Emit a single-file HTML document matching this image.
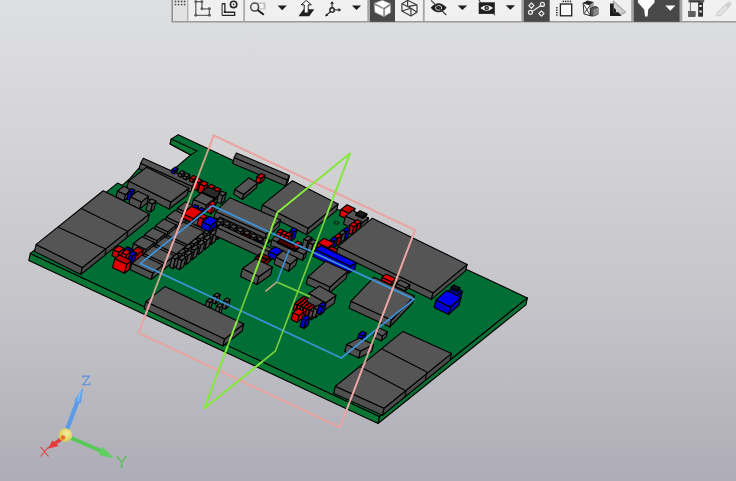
<!DOCTYPE html>
<html><head><meta charset="utf-8"><style>
html,body{margin:0;padding:0;width:736px;height:481px;overflow:hidden;}
body{background:linear-gradient(to bottom,#dedfe0 0%,#d3d3d5 31%,#c5c5ca 62%,#aeadb7 100%);position:relative;font-family:"Liberation Sans",sans-serif;}
svg{position:absolute;left:0;top:0;}
</style></head><body>
<svg width="736" height="481" viewBox="0 0 736 481">
<defs><filter id="bl" x="-5%" y="-5%" width="110%" height="110%"><feGaussianBlur stdDeviation="0.35"/></filter></defs>
<g filter="url(#bl)">
<polygon points="30.3,253.4 379.5,416.5 378.0,423.5 28.8,260.4" fill="#087636" stroke="#000" stroke-width="1.1" stroke-linejoin="round"/>
<polygon points="379.5,416.5 527.4,297.9 525.9,304.9 378.0,423.5" fill="#077134" stroke="#000" stroke-width="1.1" stroke-linejoin="round"/>
<polygon points="178.2,134.8 527.4,297.9 379.5,416.5 30.3,253.4 117.5,183.1 122.2,185.3 130.0,178.3 140.5,166.3 151.7,164.7 171.8,171.0 190.7,154.9 170.1,144.0 171.3,138.9" fill="#016e36" stroke="#000" stroke-width="1.1" stroke-linejoin="round"/>
<polygon points="171.3,138.9 197.0,150.9 190.7,154.9 170.1,144.0" fill="#087636" stroke="#000" stroke-width="1.1" stroke-linejoin="round"/>
<ellipse cx="336.5" cy="222.8" rx="2.6" ry="1.4" fill="none" stroke="#000" stroke-width="0.8"/>
<polygon points="140.6,163.2 192.5,186.5 191.1,192.0 139.2,168.7" fill="#505050" stroke="#000" stroke-width="1.1" stroke-linejoin="round"/><polygon points="192.5,186.5 195.2,181.5 193.8,187.0 191.1,192.0" fill="#4c4c4c" stroke="#000" stroke-width="1.1" stroke-linejoin="round"/><polygon points="140.6,163.2 143.3,158.2 195.2,181.5 192.5,186.5" fill="#555555" stroke="#000" stroke-width="1.1" stroke-linejoin="round"/>
<polygon points="172.0,169.5 175.0,170.9 174.2,173.9 171.2,172.5" fill="#0000cc" stroke="#000" stroke-width="1.1" stroke-linejoin="round"/><polygon points="175.0,170.9 178.0,168.5 177.2,171.5 174.2,173.9" fill="#0000b4" stroke="#000" stroke-width="1.1" stroke-linejoin="round"/><polygon points="172.0,169.5 175.0,167.1 178.0,168.5 175.0,170.9" fill="#0000ee" stroke="#000" stroke-width="1.1" stroke-linejoin="round"/>
<polygon points="234.2,157.4 287.3,180.0 285.8,186.0 232.7,163.4" fill="#505050" stroke="#000" stroke-width="1.1" stroke-linejoin="round"/><polygon points="287.3,180.0 289.5,175.6 288.0,181.6 285.8,186.0" fill="#4c4c4c" stroke="#000" stroke-width="1.1" stroke-linejoin="round"/><polygon points="234.2,157.4 236.4,153.0 289.5,175.6 287.3,180.0" fill="#555555" stroke="#000" stroke-width="1.1" stroke-linejoin="round"/>
<polygon points="178.8,173.0 181.8,174.4 181.1,177.4 178.1,176.0" fill="#505050" stroke="#000" stroke-width="1.1" stroke-linejoin="round"/><polygon points="181.8,174.4 184.8,172.0 184.1,175.0 181.1,177.4" fill="#4c4c4c" stroke="#000" stroke-width="1.1" stroke-linejoin="round"/><polygon points="178.8,173.0 181.8,170.6 184.8,172.0 181.8,174.4" fill="#555555" stroke="#000" stroke-width="1.1" stroke-linejoin="round"/>
<polygon points="183.8,175.5 186.8,176.9 186.1,179.9 183.1,178.5" fill="#505050" stroke="#000" stroke-width="1.1" stroke-linejoin="round"/><polygon points="186.8,176.9 189.8,174.5 189.1,177.5 186.1,179.9" fill="#4c4c4c" stroke="#000" stroke-width="1.1" stroke-linejoin="round"/><polygon points="183.8,175.5 186.8,173.1 189.8,174.5 186.8,176.9" fill="#555555" stroke="#000" stroke-width="1.1" stroke-linejoin="round"/>
<polygon points="190.1,177.9 193.6,179.5 192.8,182.5 189.3,180.9" fill="#cc0000" stroke="#000" stroke-width="1.1" stroke-linejoin="round"/><polygon points="193.6,179.5 196.6,177.1 195.8,180.1 192.8,182.5" fill="#b00000" stroke="#000" stroke-width="1.1" stroke-linejoin="round"/><polygon points="190.1,177.9 193.1,175.5 196.6,177.1 193.6,179.5" fill="#e40000" stroke="#000" stroke-width="1.1" stroke-linejoin="round"/>
<polygon points="257.0,176.7 261.0,178.5 259.8,183.5 255.8,181.7" fill="#cc0000" stroke="#000" stroke-width="1.1" stroke-linejoin="round"/><polygon points="261.0,178.5 265.0,175.3 263.8,180.3 259.8,183.5" fill="#b00000" stroke="#000" stroke-width="1.1" stroke-linejoin="round"/><polygon points="257.0,176.7 261.0,173.5 265.0,175.3 261.0,178.5" fill="#e40000" stroke="#000" stroke-width="1.1" stroke-linejoin="round"/>
<polygon points="194.6,180.8 198.8,182.8 196.8,190.8 192.6,188.8" fill="#cc0000" stroke="#000" stroke-width="1.1" stroke-linejoin="round"/><polygon points="198.8,182.8 202.0,180.2 200.0,188.2 196.8,190.8" fill="#b00000" stroke="#000" stroke-width="1.1" stroke-linejoin="round"/><polygon points="194.6,180.8 197.8,178.2 202.0,180.2 198.8,182.8" fill="#e40000" stroke="#000" stroke-width="1.1" stroke-linejoin="round"/>
<polygon points="207.8,186.8 211.8,188.7 210.8,192.7 206.8,190.8" fill="#cc0000" stroke="#000" stroke-width="1.1" stroke-linejoin="round"/><polygon points="211.8,188.7 215.0,186.2 214.0,190.2 210.8,192.7" fill="#b00000" stroke="#000" stroke-width="1.1" stroke-linejoin="round"/><polygon points="207.8,186.8 211.0,184.3 215.0,186.2 211.8,188.7" fill="#e40000" stroke="#000" stroke-width="1.1" stroke-linejoin="round"/>
<polygon points="234.9,189.4 243.7,194.5 242.4,199.5 233.7,194.4" fill="#505050" stroke="#000" stroke-width="1.1" stroke-linejoin="round"/><polygon points="243.7,194.5 257.6,182.9 256.4,187.9 242.4,199.5" fill="#4c4c4c" stroke="#000" stroke-width="1.1" stroke-linejoin="round"/><polygon points="234.9,189.4 248.8,177.8 257.6,182.9 243.7,194.5" fill="#555555" stroke="#000" stroke-width="1.1" stroke-linejoin="round"/>
<polygon points="200.0,183.9 204.5,186.0 202.5,194.0 198.0,191.9" fill="#cc0000" stroke="#000" stroke-width="1.1" stroke-linejoin="round"/><polygon points="204.5,186.0 208.0,183.1 206.0,191.1 202.5,194.0" fill="#b00000" stroke="#000" stroke-width="1.1" stroke-linejoin="round"/><polygon points="200.0,183.9 203.5,181.0 208.0,183.1 204.5,186.0" fill="#e40000" stroke="#000" stroke-width="1.1" stroke-linejoin="round"/>
<polygon points="128.6,181.0 171.0,202.0 169.2,209.0 126.8,188.0" fill="#505050" stroke="#000" stroke-width="1.1" stroke-linejoin="round"/><polygon points="171.0,202.0 188.9,188.2 187.2,195.2 169.2,209.0" fill="#4c4c4c" stroke="#000" stroke-width="1.1" stroke-linejoin="round"/><polygon points="128.6,181.0 146.5,167.2 188.9,188.2 171.0,202.0" fill="#555555" stroke="#000" stroke-width="1.1" stroke-linejoin="round"/>
<polygon points="213.7,189.8 217.7,191.7 216.7,195.7 212.7,193.8" fill="#cc0000" stroke="#000" stroke-width="1.1" stroke-linejoin="round"/><polygon points="217.7,191.7 220.9,189.2 219.9,193.2 216.7,195.7" fill="#b00000" stroke="#000" stroke-width="1.1" stroke-linejoin="round"/><polygon points="213.7,189.8 216.9,187.3 220.9,189.2 217.7,191.7" fill="#e40000" stroke="#000" stroke-width="1.1" stroke-linejoin="round"/>
<polygon points="202.0,191.9 215.0,197.9 214.2,200.9 201.2,194.9" fill="#202020" stroke="#000" stroke-width="1.1" stroke-linejoin="round"/><polygon points="215.0,197.9 221.0,193.1 220.2,196.1 214.2,200.9" fill="#1c1c1c" stroke="#000" stroke-width="1.1" stroke-linejoin="round"/><polygon points="202.0,191.9 208.0,187.1 221.0,193.1 215.0,197.9" fill="#2a2a2a" stroke="#000" stroke-width="1.1" stroke-linejoin="round"/>
<polygon points="117.5,191.0 125.5,194.8 124.0,200.8 116.0,197.0" fill="#505050" stroke="#000" stroke-width="1.1" stroke-linejoin="round"/><polygon points="125.5,194.8 131.5,190.0 130.0,196.0 124.0,200.8" fill="#4c4c4c" stroke="#000" stroke-width="1.1" stroke-linejoin="round"/><polygon points="117.5,191.0 123.5,186.2 131.5,190.0 125.5,194.8" fill="#555555" stroke="#000" stroke-width="1.1" stroke-linejoin="round"/>
<polygon points="128.8,191.0 131.8,192.4 129.8,200.4 126.8,199.0" fill="#0000cc" stroke="#000" stroke-width="1.1" stroke-linejoin="round"/><polygon points="131.8,192.4 134.8,190.0 132.8,198.0 129.8,200.4" fill="#0000b4" stroke="#000" stroke-width="1.1" stroke-linejoin="round"/><polygon points="128.8,191.0 131.8,188.6 134.8,190.0 131.8,192.4" fill="#0000ee" stroke="#000" stroke-width="1.1" stroke-linejoin="round"/>
<polygon points="218.8,194.0 222.8,195.8 220.8,203.8 216.8,202.0" fill="#505050" stroke="#000" stroke-width="1.1" stroke-linejoin="round"/><polygon points="222.8,195.8 226.2,193.0 224.2,201.0 220.8,203.8" fill="#4c4c4c" stroke="#000" stroke-width="1.1" stroke-linejoin="round"/><polygon points="218.8,194.0 222.2,191.2 226.2,193.0 222.8,195.8" fill="#555555" stroke="#000" stroke-width="1.1" stroke-linejoin="round"/>
<polygon points="130.5,196.7 141.5,201.9 139.8,208.9 128.8,203.7" fill="#505050" stroke="#000" stroke-width="1.1" stroke-linejoin="round"/><polygon points="141.5,201.9 148.5,196.3 146.8,203.3 139.8,208.9" fill="#4c4c4c" stroke="#000" stroke-width="1.1" stroke-linejoin="round"/><polygon points="130.5,196.7 137.5,191.1 148.5,196.3 141.5,201.9" fill="#555555" stroke="#000" stroke-width="1.1" stroke-linejoin="round"/>
<polygon points="193.5,199.2 206.5,205.2 205.0,211.2 192.0,205.2" fill="#505050" stroke="#000" stroke-width="1.1" stroke-linejoin="round"/><polygon points="206.5,205.2 214.5,198.8 213.0,204.8 205.0,211.2" fill="#4c4c4c" stroke="#000" stroke-width="1.1" stroke-linejoin="round"/><polygon points="193.5,199.2 201.5,192.8 214.5,198.8 206.5,205.2" fill="#555555" stroke="#000" stroke-width="1.1" stroke-linejoin="round"/>
<polygon points="148.0,201.9 152.5,204.0 150.5,212.0 146.0,209.9" fill="#505050" stroke="#000" stroke-width="1.1" stroke-linejoin="round"/><polygon points="152.5,204.0 156.0,201.1 154.0,209.1 150.5,212.0" fill="#4c4c4c" stroke="#000" stroke-width="1.1" stroke-linejoin="round"/><polygon points="148.0,201.9 151.5,199.0 156.0,201.1 152.5,204.0" fill="#555555" stroke="#000" stroke-width="1.1" stroke-linejoin="round"/>
<polygon points="262.5,204.9 308.2,228.2 306.6,234.7 260.9,211.4" fill="#505050" stroke="#000" stroke-width="1.1" stroke-linejoin="round"/><polygon points="308.2,228.2 338.1,204.1 336.5,210.6 306.6,234.7" fill="#4c4c4c" stroke="#000" stroke-width="1.1" stroke-linejoin="round"/><polygon points="262.5,204.9 292.4,180.8 338.1,204.1 308.2,228.2" fill="#555555" stroke="#000" stroke-width="1.1" stroke-linejoin="round"/>
<polygon points="208.8,204.0 212.8,205.8 210.8,213.8 206.8,212.0" fill="#cc0000" stroke="#000" stroke-width="1.1" stroke-linejoin="round"/><polygon points="212.8,205.8 216.2,203.0 214.2,211.0 210.8,213.8" fill="#b00000" stroke="#000" stroke-width="1.1" stroke-linejoin="round"/><polygon points="208.8,204.0 212.2,201.2 216.2,203.0 212.8,205.8" fill="#e40000" stroke="#000" stroke-width="1.1" stroke-linejoin="round"/>
<polygon points="177.4,208.3 189.9,214.1 188.3,220.6 175.8,214.8" fill="#505050" stroke="#000" stroke-width="1.1" stroke-linejoin="round"/><polygon points="189.9,214.1 197.9,207.7 196.3,214.2 188.3,220.6" fill="#4c4c4c" stroke="#000" stroke-width="1.1" stroke-linejoin="round"/><polygon points="177.4,208.3 185.4,201.9 197.9,207.7 189.9,214.1" fill="#555555" stroke="#000" stroke-width="1.1" stroke-linejoin="round"/>
<polygon points="341.0,209.5 349.0,213.3 347.5,219.3 339.5,215.5" fill="#e80000" stroke="#000" stroke-width="1.1" stroke-linejoin="round"/><polygon points="349.0,213.3 355.0,208.5 353.5,214.5 347.5,219.3" fill="#d00000" stroke="#000" stroke-width="1.1" stroke-linejoin="round"/><polygon points="341.0,209.5 347.0,204.7 355.0,208.5 349.0,213.3" fill="#c00000" stroke="#000" stroke-width="1.1" stroke-linejoin="round"/>
<polygon points="215.6,211.4 266.2,233.8 264.7,239.8 214.1,217.4" fill="#505050" stroke="#000" stroke-width="1.1" stroke-linejoin="round"/><polygon points="266.2,233.8 280.6,220.1 279.1,226.1 264.7,239.8" fill="#4c4c4c" stroke="#000" stroke-width="1.1" stroke-linejoin="round"/><polygon points="215.6,211.4 230.0,197.7 280.6,220.1 266.2,233.8" fill="#555555" stroke="#000" stroke-width="1.1" stroke-linejoin="round"/>
<polygon points="166.4,217.1 178.9,222.9 177.3,229.4 164.8,223.6" fill="#505050" stroke="#000" stroke-width="1.1" stroke-linejoin="round"/><polygon points="178.9,222.9 187.4,216.1 185.8,222.6 177.3,229.4" fill="#4c4c4c" stroke="#000" stroke-width="1.1" stroke-linejoin="round"/><polygon points="166.4,217.1 174.9,210.3 187.4,216.1 178.9,222.9" fill="#555555" stroke="#000" stroke-width="1.1" stroke-linejoin="round"/>
<polygon points="345.5,216.1 361.5,223.5 359.5,231.5 343.5,224.1" fill="#505050" stroke="#000" stroke-width="1.1" stroke-linejoin="round"/><polygon points="361.5,223.5 368.5,217.9 366.5,225.9 359.5,231.5" fill="#4c4c4c" stroke="#000" stroke-width="1.1" stroke-linejoin="round"/><polygon points="345.5,216.1 352.5,210.5 368.5,217.9 361.5,223.5" fill="#555555" stroke="#000" stroke-width="1.1" stroke-linejoin="round"/>
<polygon points="185.4,220.3 206.4,230.1 204.8,236.6 183.8,226.8" fill="#505050" stroke="#000" stroke-width="1.1" stroke-linejoin="round"/><polygon points="206.4,230.1 216.4,222.0 214.8,228.5 204.8,236.6" fill="#4c4c4c" stroke="#000" stroke-width="1.1" stroke-linejoin="round"/><polygon points="185.4,220.3 195.4,212.2 216.4,222.0 206.4,230.1" fill="#555555" stroke="#000" stroke-width="1.1" stroke-linejoin="round"/>
<polygon points="353.8,222.5 357.8,224.3 355.8,232.3 351.8,230.5" fill="#cc0000" stroke="#000" stroke-width="1.1" stroke-linejoin="round"/><polygon points="357.8,224.3 361.2,221.5 359.2,229.5 355.8,232.3" fill="#b00000" stroke="#000" stroke-width="1.1" stroke-linejoin="round"/><polygon points="353.8,222.5 357.2,219.7 361.2,221.5 357.8,224.3" fill="#e40000" stroke="#000" stroke-width="1.1" stroke-linejoin="round"/>
<polygon points="155.4,225.9 167.9,231.7 166.3,238.2 153.8,232.4" fill="#505050" stroke="#000" stroke-width="1.1" stroke-linejoin="round"/><polygon points="167.9,231.7 176.4,224.9 174.8,231.4 166.3,238.2" fill="#4c4c4c" stroke="#000" stroke-width="1.1" stroke-linejoin="round"/><polygon points="155.4,225.9 163.9,219.1 176.4,224.9 167.9,231.7" fill="#555555" stroke="#000" stroke-width="1.1" stroke-linejoin="round"/>
<polygon points="349.8,225.0 353.8,226.8 351.8,234.8 347.8,233.0" fill="#cc0000" stroke="#000" stroke-width="1.1" stroke-linejoin="round"/><polygon points="353.8,226.8 357.2,224.0 355.2,232.0 351.8,234.8" fill="#b00000" stroke="#000" stroke-width="1.1" stroke-linejoin="round"/><polygon points="349.8,225.0 353.2,222.2 357.2,224.0 353.8,226.8" fill="#e40000" stroke="#000" stroke-width="1.1" stroke-linejoin="round"/>
<polygon points="209.8,227.3 213.2,228.8 210.8,238.3 207.4,236.8" fill="#505050" stroke="#000" stroke-width="1.1" stroke-linejoin="round"/><polygon points="213.2,228.8 217.4,225.5 215.0,235.0 210.8,238.3" fill="#4c4c4c" stroke="#000" stroke-width="1.1" stroke-linejoin="round"/><polygon points="209.8,227.3 214.0,223.9 217.4,225.5 213.2,228.8" fill="#555555" stroke="#000" stroke-width="1.1" stroke-linejoin="round"/>
<polygon points="214.0,221.7 264.0,245.1 263.8,246.1 213.8,222.7" fill="#3a3a3a" stroke="#000" stroke-width="1.1" stroke-linejoin="round"/><polygon points="264.0,245.1 270.0,240.3 269.8,241.3 263.8,246.1" fill="#3a3a3a" stroke="#000" stroke-width="1.1" stroke-linejoin="round"/><polygon points="214.0,221.7 220.0,216.9 270.0,240.3 264.0,245.1" fill="#3a3a3a" stroke="#000" stroke-width="1.1" stroke-linejoin="round"/>
<polygon points="36.2,244.4 82.4,267.5 80.7,274.5 34.5,251.4" fill="#505050" stroke="#000" stroke-width="1.1" stroke-linejoin="round"/><polygon points="82.4,267.5 149.4,213.9 147.7,220.9 80.7,274.5" fill="#4c4c4c" stroke="#000" stroke-width="1.1" stroke-linejoin="round"/><polygon points="36.2,244.4 103.2,190.8 149.4,213.9 82.4,267.5" fill="#555555" stroke="#000" stroke-width="1.1" stroke-linejoin="round"/><line x1="58.5" y1="227.2" x2="106.2" y2="249.3" stroke="#000" stroke-width="1.1"/><line x1="81.3" y1="208.6" x2="128.0" y2="231.6" stroke="#000" stroke-width="1.1"/><line x1="106.2" y1="249.3" x2="104.5" y2="256.3" stroke="#000" stroke-width="1.1"/><line x1="128.0" y1="231.6" x2="126.3" y2="238.6" stroke="#000" stroke-width="1.1"/>
<polygon points="217.0,220.8 221.0,222.6 220.1,226.1 216.1,224.3" fill="#505050" stroke="#000" stroke-width="1.1" stroke-linejoin="round"/><polygon points="221.0,222.6 224.0,220.2 223.1,223.7 220.1,226.1" fill="#4c4c4c" stroke="#000" stroke-width="1.1" stroke-linejoin="round"/><polygon points="217.0,220.8 220.0,218.4 224.0,220.2 221.0,222.6" fill="#555555" stroke="#000" stroke-width="1.1" stroke-linejoin="round"/>
<polygon points="223.6,223.9 227.6,225.7 226.7,229.2 222.7,227.4" fill="#505050" stroke="#000" stroke-width="1.1" stroke-linejoin="round"/><polygon points="227.6,225.7 230.6,223.3 229.7,226.8 226.7,229.2" fill="#4c4c4c" stroke="#000" stroke-width="1.1" stroke-linejoin="round"/><polygon points="223.6,223.9 226.6,221.4 230.6,223.3 227.6,225.7" fill="#555555" stroke="#000" stroke-width="1.1" stroke-linejoin="round"/>
<polygon points="230.2,226.9 234.2,228.8 233.3,232.3 229.3,230.4" fill="#505050" stroke="#000" stroke-width="1.1" stroke-linejoin="round"/><polygon points="234.2,228.8 237.2,226.4 236.3,229.9 233.3,232.3" fill="#4c4c4c" stroke="#000" stroke-width="1.1" stroke-linejoin="round"/><polygon points="230.2,226.9 233.2,224.5 237.2,226.4 234.2,228.8" fill="#555555" stroke="#000" stroke-width="1.1" stroke-linejoin="round"/>
<polygon points="236.8,230.0 240.8,231.9 239.9,235.4 235.9,233.5" fill="#505050" stroke="#000" stroke-width="1.1" stroke-linejoin="round"/><polygon points="240.8,231.9 243.8,229.5 242.9,233.0 239.9,235.4" fill="#4c4c4c" stroke="#000" stroke-width="1.1" stroke-linejoin="round"/><polygon points="236.8,230.0 239.8,227.6 243.8,229.5 240.8,231.9" fill="#555555" stroke="#000" stroke-width="1.1" stroke-linejoin="round"/>
<polygon points="243.4,233.1 247.4,235.0 246.5,238.5 242.5,236.6" fill="#505050" stroke="#000" stroke-width="1.1" stroke-linejoin="round"/><polygon points="247.4,235.0 250.4,232.6 249.5,236.1 246.5,238.5" fill="#4c4c4c" stroke="#000" stroke-width="1.1" stroke-linejoin="round"/><polygon points="243.4,233.1 246.4,230.7 250.4,232.6 247.4,235.0" fill="#555555" stroke="#000" stroke-width="1.1" stroke-linejoin="round"/>
<polygon points="250.0,236.2 254.0,238.1 253.1,241.6 249.1,239.7" fill="#505050" stroke="#000" stroke-width="1.1" stroke-linejoin="round"/><polygon points="254.0,238.1 257.0,235.6 256.1,239.1 253.1,241.6" fill="#4c4c4c" stroke="#000" stroke-width="1.1" stroke-linejoin="round"/><polygon points="250.0,236.2 253.0,233.8 257.0,235.6 254.0,238.1" fill="#555555" stroke="#000" stroke-width="1.1" stroke-linejoin="round"/>
<polygon points="256.6,239.3 260.6,241.1 259.7,244.6 255.7,242.8" fill="#505050" stroke="#000" stroke-width="1.1" stroke-linejoin="round"/><polygon points="260.6,241.1 263.6,238.7 262.7,242.2 259.7,244.6" fill="#4c4c4c" stroke="#000" stroke-width="1.1" stroke-linejoin="round"/><polygon points="256.6,239.3 259.6,236.9 263.6,238.7 260.6,241.1" fill="#555555" stroke="#000" stroke-width="1.1" stroke-linejoin="round"/>
<polygon points="216.3,228.4 219.7,230.0 217.3,239.5 213.9,237.9" fill="#505050" stroke="#000" stroke-width="1.1" stroke-linejoin="round"/><polygon points="219.7,230.0 223.9,226.6 221.5,236.1 217.3,239.5" fill="#4c4c4c" stroke="#000" stroke-width="1.1" stroke-linejoin="round"/><polygon points="216.3,228.4 220.5,225.0 223.9,226.6 219.7,230.0" fill="#555555" stroke="#000" stroke-width="1.1" stroke-linejoin="round"/>
<polygon points="277.2,231.4 280.8,233.0 279.0,240.0 275.5,238.4" fill="#cc0000" stroke="#000" stroke-width="1.1" stroke-linejoin="round"/><polygon points="280.8,233.0 283.8,230.6 282.0,237.6 279.0,240.0" fill="#b00000" stroke="#000" stroke-width="1.1" stroke-linejoin="round"/><polygon points="277.2,231.4 280.2,229.0 283.8,230.6 280.8,233.0" fill="#e40000" stroke="#000" stroke-width="1.1" stroke-linejoin="round"/>
<polygon points="241.0,234.9 249.0,238.7 248.8,239.7 240.8,235.9" fill="#500000" stroke="#000" stroke-width="1.1" stroke-linejoin="round"/><polygon points="249.0,238.7 251.0,237.1 250.8,238.1 248.8,239.7" fill="#500000" stroke="#000" stroke-width="1.1" stroke-linejoin="round"/><polygon points="241.0,234.9 243.0,233.3 251.0,237.1 249.0,238.7" fill="#600000" stroke="#000" stroke-width="1.1" stroke-linejoin="round"/>
<polygon points="253.0,240.9 261.0,244.7 260.8,245.7 252.8,241.9" fill="#000050" stroke="#000" stroke-width="1.1" stroke-linejoin="round"/><polygon points="261.0,244.7 263.0,243.1 262.8,244.1 260.8,245.7" fill="#000050" stroke="#000" stroke-width="1.1" stroke-linejoin="round"/><polygon points="253.0,240.9 255.0,239.3 263.0,243.1 261.0,244.7" fill="#000060" stroke="#000" stroke-width="1.1" stroke-linejoin="round"/>
<polygon points="343.0,230.1 346.5,231.7 344.2,240.7 340.8,239.1" fill="#0000cc" stroke="#000" stroke-width="1.1" stroke-linejoin="round"/><polygon points="346.5,231.7 350.0,228.9 347.8,237.9 344.2,240.7" fill="#0000b4" stroke="#000" stroke-width="1.1" stroke-linejoin="round"/><polygon points="343.0,230.1 346.5,227.3 350.0,228.9 346.5,231.7" fill="#0000ee" stroke="#000" stroke-width="1.1" stroke-linejoin="round"/>
<polygon points="290.0,230.6 293.5,232.2 291.2,241.2 287.8,239.6" fill="#0000cc" stroke="#000" stroke-width="1.1" stroke-linejoin="round"/><polygon points="293.5,232.2 297.0,229.4 294.8,238.4 291.2,241.2" fill="#0000b4" stroke="#000" stroke-width="1.1" stroke-linejoin="round"/><polygon points="290.0,230.6 293.5,227.8 297.0,229.4 293.5,232.2" fill="#0000ee" stroke="#000" stroke-width="1.1" stroke-linejoin="round"/>
<polygon points="166.9,235.1 187.9,244.9 186.3,251.4 165.3,241.6" fill="#505050" stroke="#000" stroke-width="1.1" stroke-linejoin="round"/><polygon points="187.9,244.9 204.4,231.7 202.8,238.2 186.3,251.4" fill="#4c4c4c" stroke="#000" stroke-width="1.1" stroke-linejoin="round"/><polygon points="166.9,235.1 183.4,221.9 204.4,231.7 187.9,244.9" fill="#555555" stroke="#000" stroke-width="1.1" stroke-linejoin="round"/>
<polygon points="281.2,233.4 284.8,235.0 283.0,242.0 279.5,240.4" fill="#cc0000" stroke="#000" stroke-width="1.1" stroke-linejoin="round"/><polygon points="284.8,235.0 287.8,232.6 286.0,239.6 283.0,242.0" fill="#b00000" stroke="#000" stroke-width="1.1" stroke-linejoin="round"/><polygon points="281.2,233.4 284.2,231.0 287.8,232.6 284.8,235.0" fill="#e40000" stroke="#000" stroke-width="1.1" stroke-linejoin="round"/>
<polygon points="356.0,214.0 363.0,217.2 362.7,218.4 355.7,215.2" fill="#1a1a1a" stroke="#000" stroke-width="1.1" stroke-linejoin="round"/><polygon points="363.0,217.2 367.0,214.0 366.7,215.2 362.7,218.4" fill="#1a1a1a" stroke="#000" stroke-width="1.1" stroke-linejoin="round"/><polygon points="356.0,214.0 360.0,210.8 367.0,214.0 363.0,217.2" fill="#1a1a1a" stroke="#000" stroke-width="1.1" stroke-linejoin="round"/>
<polygon points="285.2,234.9 288.8,236.5 287.2,242.5 283.8,240.9" fill="#cc0000" stroke="#000" stroke-width="1.1" stroke-linejoin="round"/><polygon points="288.8,236.5 291.8,234.1 290.2,240.1 287.2,242.5" fill="#b00000" stroke="#000" stroke-width="1.1" stroke-linejoin="round"/><polygon points="285.2,234.9 288.2,232.5 291.8,234.1 288.8,236.5" fill="#e40000" stroke="#000" stroke-width="1.1" stroke-linejoin="round"/>
<polygon points="339.0,233.1 342.5,234.7 340.5,242.7 337.0,241.1" fill="#505050" stroke="#000" stroke-width="1.1" stroke-linejoin="round"/><polygon points="342.5,234.7 346.0,231.9 344.0,239.9 340.5,242.7" fill="#4c4c4c" stroke="#000" stroke-width="1.1" stroke-linejoin="round"/><polygon points="339.0,233.1 342.5,230.3 346.0,231.9 342.5,234.7" fill="#555555" stroke="#000" stroke-width="1.1" stroke-linejoin="round"/>
<polygon points="144.4,234.7 156.9,240.6 155.3,247.1 142.8,241.2" fill="#505050" stroke="#000" stroke-width="1.1" stroke-linejoin="round"/><polygon points="156.9,240.6 165.4,233.8 163.8,240.3 155.3,247.1" fill="#4c4c4c" stroke="#000" stroke-width="1.1" stroke-linejoin="round"/><polygon points="144.4,234.7 152.9,227.9 165.4,233.8 156.9,240.6" fill="#555555" stroke="#000" stroke-width="1.1" stroke-linejoin="round"/>
<polygon points="203.5,232.3 206.9,233.9 204.5,243.4 201.1,241.8" fill="#505050" stroke="#000" stroke-width="1.1" stroke-linejoin="round"/><polygon points="206.9,233.9 211.1,230.5 208.7,240.0 204.5,243.4" fill="#4c4c4c" stroke="#000" stroke-width="1.1" stroke-linejoin="round"/><polygon points="203.5,232.3 207.7,228.9 211.1,230.5 206.9,233.9" fill="#555555" stroke="#000" stroke-width="1.1" stroke-linejoin="round"/>
<polygon points="210.0,233.4 213.4,235.0 211.0,244.5 207.6,242.9" fill="#505050" stroke="#000" stroke-width="1.1" stroke-linejoin="round"/><polygon points="213.4,235.0 217.6,231.7 215.2,241.2 211.0,244.5" fill="#4c4c4c" stroke="#000" stroke-width="1.1" stroke-linejoin="round"/><polygon points="210.0,233.4 214.2,230.1 217.6,231.7 213.4,235.0" fill="#555555" stroke="#000" stroke-width="1.1" stroke-linejoin="round"/>
<polygon points="334.5,236.6 338.0,238.2 336.0,246.2 332.5,244.6" fill="#cc0000" stroke="#000" stroke-width="1.1" stroke-linejoin="round"/><polygon points="338.0,238.2 341.5,235.4 339.5,243.4 336.0,246.2" fill="#b00000" stroke="#000" stroke-width="1.1" stroke-linejoin="round"/><polygon points="334.5,236.6 338.0,233.8 341.5,235.4 338.0,238.2" fill="#e40000" stroke="#000" stroke-width="1.1" stroke-linejoin="round"/>
<polygon points="197.2,237.4 200.6,238.9 198.2,248.4 194.8,246.9" fill="#505050" stroke="#000" stroke-width="1.1" stroke-linejoin="round"/><polygon points="200.6,238.9 204.8,235.6 202.4,245.1 198.2,248.4" fill="#4c4c4c" stroke="#000" stroke-width="1.1" stroke-linejoin="round"/><polygon points="197.2,237.4 201.4,234.0 204.8,235.6 200.6,238.9" fill="#555555" stroke="#000" stroke-width="1.1" stroke-linejoin="round"/>
<polygon points="217.0,227.5 272.0,253.0 270.0,261.0 215.0,235.5" fill="#505050" stroke="#000" stroke-width="1.1" stroke-linejoin="round"/><polygon points="272.0,253.0 275.0,250.0 273.0,258.0 270.0,261.0" fill="#4c4c4c" stroke="#000" stroke-width="1.1" stroke-linejoin="round"/><polygon points="217.0,227.5 220.0,224.5 275.0,250.0 272.0,253.0" fill="#555555" stroke="#000" stroke-width="1.1" stroke-linejoin="round"/>
<polygon points="330.5,239.6 334.0,241.2 332.0,249.2 328.5,247.6" fill="#0000cc" stroke="#000" stroke-width="1.1" stroke-linejoin="round"/><polygon points="334.0,241.2 337.5,238.4 335.5,246.4 332.0,249.2" fill="#0000b4" stroke="#000" stroke-width="1.1" stroke-linejoin="round"/><polygon points="330.5,239.6 334.0,236.8 337.5,238.4 334.0,241.2" fill="#0000ee" stroke="#000" stroke-width="1.1" stroke-linejoin="round"/>
<polygon points="203.7,238.5 207.1,240.1 204.7,249.6 201.3,248.0" fill="#505050" stroke="#000" stroke-width="1.1" stroke-linejoin="round"/><polygon points="207.1,240.1 211.3,236.7 208.9,246.2 204.7,249.6" fill="#4c4c4c" stroke="#000" stroke-width="1.1" stroke-linejoin="round"/><polygon points="203.7,238.5 207.9,235.1 211.3,236.7 207.1,240.1" fill="#555555" stroke="#000" stroke-width="1.1" stroke-linejoin="round"/>
<polygon points="318.0,243.1 328.0,247.7 326.5,253.7 316.5,249.1" fill="#cc0000" stroke="#000" stroke-width="1.1" stroke-linejoin="round"/><polygon points="328.0,247.7 334.0,242.9 332.5,248.9 326.5,253.7" fill="#b00000" stroke="#000" stroke-width="1.1" stroke-linejoin="round"/><polygon points="318.0,243.1 324.0,238.3 334.0,242.9 328.0,247.7" fill="#e40000" stroke="#000" stroke-width="1.1" stroke-linejoin="round"/>
<polygon points="304.0,239.2 308.0,241.0 306.0,249.0 302.0,247.2" fill="#505050" stroke="#000" stroke-width="1.1" stroke-linejoin="round"/><polygon points="308.0,241.0 312.0,237.8 310.0,245.8 306.0,249.0" fill="#4c4c4c" stroke="#000" stroke-width="1.1" stroke-linejoin="round"/><polygon points="304.0,239.2 308.0,236.0 312.0,237.8 308.0,241.0" fill="#555555" stroke="#000" stroke-width="1.1" stroke-linejoin="round"/>
<polygon points="309.0,242.7 313.0,244.5 311.0,252.5 307.0,250.7" fill="#505050" stroke="#000" stroke-width="1.1" stroke-linejoin="round"/><polygon points="313.0,244.5 317.0,241.3 315.0,249.3 311.0,252.5" fill="#4c4c4c" stroke="#000" stroke-width="1.1" stroke-linejoin="round"/><polygon points="309.0,242.7 313.0,239.5 317.0,241.3 313.0,244.5" fill="#555555" stroke="#000" stroke-width="1.1" stroke-linejoin="round"/>
<polygon points="133.4,243.5 145.9,249.4 144.3,255.9 131.8,250.0" fill="#505050" stroke="#000" stroke-width="1.1" stroke-linejoin="round"/><polygon points="145.9,249.4 154.4,242.6 152.8,249.1 144.3,255.9" fill="#4c4c4c" stroke="#000" stroke-width="1.1" stroke-linejoin="round"/><polygon points="133.4,243.5 141.9,236.7 154.4,242.6 145.9,249.4" fill="#555555" stroke="#000" stroke-width="1.1" stroke-linejoin="round"/>
<polygon points="272.0,239.5 304.0,254.5 302.5,260.5 270.5,245.5" fill="#505050" stroke="#000" stroke-width="1.1" stroke-linejoin="round"/><polygon points="304.0,254.5 307.0,251.0 305.5,257.0 302.5,260.5" fill="#4c4c4c" stroke="#000" stroke-width="1.1" stroke-linejoin="round"/><polygon points="272.0,239.5 275.0,236.0 307.0,251.0 304.0,254.5" fill="#555555" stroke="#000" stroke-width="1.1" stroke-linejoin="round"/>
<polygon points="277.5,241.5 295.5,249.9 295.1,251.4 277.1,243.0" fill="#400000" stroke="#000" stroke-width="1.1" stroke-linejoin="round"/><polygon points="295.5,249.9 298.5,247.5 298.1,249.0 295.1,251.4" fill="#400000" stroke="#000" stroke-width="1.1" stroke-linejoin="round"/><polygon points="277.5,241.5 280.5,239.1 298.5,247.5 295.5,249.9" fill="#5a0000" stroke="#000" stroke-width="1.1" stroke-linejoin="round"/>
<polygon points="190.9,242.4 194.3,244.0 191.9,253.5 188.5,251.9" fill="#505050" stroke="#000" stroke-width="1.1" stroke-linejoin="round"/><polygon points="194.3,244.0 198.5,240.6 196.1,250.1 191.9,253.5" fill="#4c4c4c" stroke="#000" stroke-width="1.1" stroke-linejoin="round"/><polygon points="190.9,242.4 195.1,239.0 198.5,240.6 194.3,244.0" fill="#555555" stroke="#000" stroke-width="1.1" stroke-linejoin="round"/>
<polygon points="155.4,244.3 176.4,254.1 174.8,260.6 153.8,250.8" fill="#505050" stroke="#000" stroke-width="1.1" stroke-linejoin="round"/><polygon points="176.4,254.1 185.9,246.5 184.3,253.0 174.8,260.6" fill="#4c4c4c" stroke="#000" stroke-width="1.1" stroke-linejoin="round"/><polygon points="155.4,244.3 164.9,236.7 185.9,246.5 176.4,254.1" fill="#555555" stroke="#000" stroke-width="1.1" stroke-linejoin="round"/>
<polygon points="328.5,248.9 338.5,253.5 338.0,255.5 328.0,250.9" fill="#a00000" stroke="#000" stroke-width="1.1" stroke-linejoin="round"/><polygon points="338.5,253.5 341.5,251.1 341.0,253.1 338.0,255.5" fill="#900000" stroke="#000" stroke-width="1.1" stroke-linejoin="round"/><polygon points="328.5,248.9 331.5,246.5 341.5,251.1 338.5,253.5" fill="#b00000" stroke="#000" stroke-width="1.1" stroke-linejoin="round"/>
<polygon points="294.5,243.3 298.5,245.1 297.5,249.1 293.5,247.3" fill="#cc0000" stroke="#000" stroke-width="1.1" stroke-linejoin="round"/><polygon points="298.5,245.1 301.5,242.7 300.5,246.7 297.5,249.1" fill="#b00000" stroke="#000" stroke-width="1.1" stroke-linejoin="round"/><polygon points="294.5,243.3 297.5,240.9 301.5,242.7 298.5,245.1" fill="#e40000" stroke="#000" stroke-width="1.1" stroke-linejoin="round"/>
<polygon points="197.4,243.5 200.8,245.1 198.4,254.6 195.0,253.0" fill="#505050" stroke="#000" stroke-width="1.1" stroke-linejoin="round"/><polygon points="200.8,245.1 205.0,241.8 202.6,251.3 198.4,254.6" fill="#4c4c4c" stroke="#000" stroke-width="1.1" stroke-linejoin="round"/><polygon points="197.4,243.5 201.6,240.2 205.0,241.8 200.8,245.1" fill="#555555" stroke="#000" stroke-width="1.1" stroke-linejoin="round"/>
<polygon points="119.5,253.1 131.5,258.7 131.0,260.7 119.0,255.1" fill="#000060" stroke="#000" stroke-width="1.1" stroke-linejoin="round"/><polygon points="131.5,258.7 139.5,252.3 139.0,254.3 131.0,260.7" fill="#000060" stroke="#000" stroke-width="1.1" stroke-linejoin="round"/><polygon points="119.5,253.1 127.5,246.7 139.5,252.3 131.5,258.7" fill="#000070" stroke="#000" stroke-width="1.1" stroke-linejoin="round"/>
<polygon points="269.0,251.5 277.0,255.3 275.8,260.3 267.8,256.5" fill="#0000cc" stroke="#000" stroke-width="1.1" stroke-linejoin="round"/><polygon points="277.0,255.3 283.0,250.5 281.8,255.5 275.8,260.3" fill="#0000b4" stroke="#000" stroke-width="1.1" stroke-linejoin="round"/><polygon points="269.0,251.5 275.0,246.7 283.0,250.5 277.0,255.3" fill="#0000ee" stroke="#000" stroke-width="1.1" stroke-linejoin="round"/>
<polygon points="113.5,249.7 119.0,252.3 117.5,258.3 112.0,255.7" fill="#cc0000" stroke="#000" stroke-width="1.1" stroke-linejoin="round"/><polygon points="119.0,252.3 124.0,248.3 122.5,254.3 117.5,258.3" fill="#b00000" stroke="#000" stroke-width="1.1" stroke-linejoin="round"/><polygon points="113.5,249.7 118.5,245.7 124.0,248.3 119.0,252.3" fill="#e40000" stroke="#000" stroke-width="1.1" stroke-linejoin="round"/>
<polygon points="184.6,247.5 188.0,249.1 185.6,258.6 182.2,257.0" fill="#505050" stroke="#000" stroke-width="1.1" stroke-linejoin="round"/><polygon points="188.0,249.1 192.2,245.7 189.8,255.2 185.6,258.6" fill="#4c4c4c" stroke="#000" stroke-width="1.1" stroke-linejoin="round"/><polygon points="184.6,247.5 188.8,244.1 192.2,245.7 188.0,249.1" fill="#555555" stroke="#000" stroke-width="1.1" stroke-linejoin="round"/>
<polygon points="129.5,253.5 135.5,256.3 133.8,263.3 127.8,260.5" fill="#d80000" stroke="#000" stroke-width="1.1" stroke-linejoin="round"/><polygon points="135.5,256.3 143.5,249.9 141.8,256.9 133.8,263.3" fill="#c00000" stroke="#000" stroke-width="1.1" stroke-linejoin="round"/><polygon points="129.5,253.5 137.5,247.1 143.5,249.9 135.5,256.3" fill="#b00000" stroke="#000" stroke-width="1.1" stroke-linejoin="round"/>
<polygon points="191.1,248.6 194.5,250.2 192.1,259.7 188.7,258.1" fill="#505050" stroke="#000" stroke-width="1.1" stroke-linejoin="round"/><polygon points="194.5,250.2 198.7,246.8 196.3,256.3 192.1,259.7" fill="#4c4c4c" stroke="#000" stroke-width="1.1" stroke-linejoin="round"/><polygon points="191.1,248.6 195.3,245.2 198.7,246.8 194.5,250.2" fill="#555555" stroke="#000" stroke-width="1.1" stroke-linejoin="round"/>
<polygon points="341.5,254.9 351.5,259.5 351.0,261.5 341.0,256.9" fill="#a00000" stroke="#000" stroke-width="1.1" stroke-linejoin="round"/><polygon points="351.5,259.5 354.5,257.1 354.0,259.1 351.0,261.5" fill="#900000" stroke="#000" stroke-width="1.1" stroke-linejoin="round"/><polygon points="341.5,254.9 344.5,252.5 354.5,257.1 351.5,259.5" fill="#b00000" stroke="#000" stroke-width="1.1" stroke-linejoin="round"/>
<polygon points="128.5,254.4 132.5,256.2 130.2,265.2 126.2,263.4" fill="#0000cc" stroke="#000" stroke-width="1.1" stroke-linejoin="round"/><polygon points="132.5,256.2 136.5,253.0 134.2,262.0 130.2,265.2" fill="#0000b4" stroke="#000" stroke-width="1.1" stroke-linejoin="round"/><polygon points="128.5,254.4 132.5,251.2 136.5,253.0 132.5,256.2" fill="#0000ee" stroke="#000" stroke-width="1.1" stroke-linejoin="round"/>
<polygon points="122.0,252.8 126.5,254.9 125.0,260.9 120.5,258.8" fill="#cc0000" stroke="#000" stroke-width="1.1" stroke-linejoin="round"/><polygon points="126.5,254.9 130.4,251.6 128.9,257.6 125.0,260.9" fill="#b00000" stroke="#000" stroke-width="1.1" stroke-linejoin="round"/><polygon points="122.0,252.8 126.0,249.5 130.4,251.6 126.5,254.9" fill="#e40000" stroke="#000" stroke-width="1.1" stroke-linejoin="round"/>
<polygon points="114.8,258.7 126.8,264.3 124.5,273.3 112.5,267.7" fill="#e00000" stroke="#000" stroke-width="1.1" stroke-linejoin="round"/><polygon points="126.8,264.3 131.2,260.7 129.0,269.7 124.5,273.3" fill="#c80000" stroke="#000" stroke-width="1.1" stroke-linejoin="round"/><polygon points="114.8,258.7 119.2,255.1 131.2,260.7 126.8,264.3" fill="#c00000" stroke="#000" stroke-width="1.1" stroke-linejoin="round"/>
<polygon points="143.9,253.5 164.9,263.3 163.3,269.8 142.3,260.0" fill="#505050" stroke="#000" stroke-width="1.1" stroke-linejoin="round"/><polygon points="164.9,263.3 174.4,255.7 172.8,262.2 163.3,269.8" fill="#4c4c4c" stroke="#000" stroke-width="1.1" stroke-linejoin="round"/><polygon points="143.9,253.5 153.4,245.9 174.4,255.7 164.9,263.3" fill="#555555" stroke="#000" stroke-width="1.1" stroke-linejoin="round"/>
<polygon points="178.3,252.5 181.7,254.1 179.3,263.6 175.9,262.0" fill="#505050" stroke="#000" stroke-width="1.1" stroke-linejoin="round"/><polygon points="181.7,254.1 185.9,250.7 183.5,260.2 179.3,263.6" fill="#4c4c4c" stroke="#000" stroke-width="1.1" stroke-linejoin="round"/><polygon points="178.3,252.5 182.5,249.1 185.9,250.7 181.7,254.1" fill="#555555" stroke="#000" stroke-width="1.1" stroke-linejoin="round"/>
<polygon points="338.1,246.6 433.0,292.8 431.4,299.3 336.5,253.1" fill="#505050" stroke="#000" stroke-width="1.1" stroke-linejoin="round"/><polygon points="433.0,292.8 467.2,264.4 465.6,270.9 431.4,299.3" fill="#4c4c4c" stroke="#000" stroke-width="1.1" stroke-linejoin="round"/><polygon points="338.1,246.6 372.3,218.2 467.2,264.4 433.0,292.8" fill="#555555" stroke="#000" stroke-width="1.1" stroke-linejoin="round"/>
<polygon points="184.8,253.7 188.2,255.2 185.8,264.7 182.4,263.2" fill="#505050" stroke="#000" stroke-width="1.1" stroke-linejoin="round"/><polygon points="188.2,255.2 192.4,251.9 190.0,261.4 185.8,264.7" fill="#4c4c4c" stroke="#000" stroke-width="1.1" stroke-linejoin="round"/><polygon points="184.8,253.7 189.0,250.3 192.4,251.9 188.2,255.2" fill="#555555" stroke="#000" stroke-width="1.1" stroke-linejoin="round"/>
<polygon points="255.0,257.8 264.0,262.0 262.8,267.0 253.8,262.8" fill="#c00000" stroke="#000" stroke-width="1.1" stroke-linejoin="round"/><polygon points="264.0,262.0 270.0,257.2 268.8,262.2 262.8,267.0" fill="#a00000" stroke="#000" stroke-width="1.1" stroke-linejoin="round"/><polygon points="255.0,257.8 261.0,253.0 270.0,257.2 264.0,262.0" fill="#8a0000" stroke="#000" stroke-width="1.1" stroke-linejoin="round"/>
<polygon points="314.8,249.2 350.2,266.2 348.4,273.2 313.1,256.2" fill="#0000cc" stroke="#000" stroke-width="1.1" stroke-linejoin="round"/><polygon points="350.2,266.2 356.4,262.8 354.7,269.8 348.4,273.2" fill="#0000b4" stroke="#000" stroke-width="1.1" stroke-linejoin="round"/><polygon points="314.8,249.2 321.0,245.8 356.4,262.8 350.2,266.2" fill="#0000ee" stroke="#000" stroke-width="1.1" stroke-linejoin="round"/>
<polygon points="275.8,257.0 290.3,264.3 288.6,271.3 274.1,264.0" fill="#505050" stroke="#000" stroke-width="1.1" stroke-linejoin="round"/><polygon points="290.3,264.3 297.5,258.1 295.7,265.1 288.6,271.3" fill="#4c4c4c" stroke="#000" stroke-width="1.1" stroke-linejoin="round"/><polygon points="275.8,257.0 283.0,250.8 297.5,258.1 290.3,264.3" fill="#555555" stroke="#000" stroke-width="1.1" stroke-linejoin="round"/>
<polygon points="258.2,255.9 266.2,259.6 266.1,260.1 258.1,256.4" fill="#400000" stroke="#000" stroke-width="1.1" stroke-linejoin="round"/><polygon points="266.2,259.6 266.8,259.1 266.7,259.6 266.1,260.1" fill="#400000" stroke="#000" stroke-width="1.1" stroke-linejoin="round"/><polygon points="258.2,255.9 258.8,255.4 266.8,259.1 266.2,259.6" fill="#400000" stroke="#000" stroke-width="1.1" stroke-linejoin="round"/>
<polygon points="172.0,257.6 175.4,259.2 173.0,268.7 169.6,267.1" fill="#505050" stroke="#000" stroke-width="1.1" stroke-linejoin="round"/><polygon points="175.4,259.2 179.6,255.8 177.2,265.3 173.0,268.7" fill="#4c4c4c" stroke="#000" stroke-width="1.1" stroke-linejoin="round"/><polygon points="172.0,257.6 176.2,254.2 179.6,255.8 175.4,259.2" fill="#555555" stroke="#000" stroke-width="1.1" stroke-linejoin="round"/>
<polygon points="178.5,258.7 181.9,260.3 179.5,269.8 176.1,268.2" fill="#505050" stroke="#000" stroke-width="1.1" stroke-linejoin="round"/><polygon points="181.9,260.3 186.1,256.9 183.7,266.4 179.5,269.8" fill="#4c4c4c" stroke="#000" stroke-width="1.1" stroke-linejoin="round"/><polygon points="178.5,258.7 182.7,255.3 186.1,256.9 181.9,260.3" fill="#555555" stroke="#000" stroke-width="1.1" stroke-linejoin="round"/>
<polygon points="131.9,263.2 152.9,273.0 151.3,279.5 130.3,269.7" fill="#505050" stroke="#000" stroke-width="1.1" stroke-linejoin="round"/><polygon points="152.9,273.0 162.9,264.9 161.3,271.4 151.3,279.5" fill="#4c4c4c" stroke="#000" stroke-width="1.1" stroke-linejoin="round"/><polygon points="131.9,263.2 141.9,255.1 162.9,264.9 152.9,273.0" fill="#555555" stroke="#000" stroke-width="1.1" stroke-linejoin="round"/>
<polygon points="242.5,268.5 259.0,276.5 257.0,284.5 240.5,276.5" fill="#505050" stroke="#000" stroke-width="1.1" stroke-linejoin="round"/><polygon points="259.0,276.5 272.5,267.0 270.5,275.0 257.0,284.5" fill="#4c4c4c" stroke="#000" stroke-width="1.1" stroke-linejoin="round"/><polygon points="242.5,268.5 256.0,259.0 272.5,267.0 259.0,276.5" fill="#555555" stroke="#000" stroke-width="1.1" stroke-linejoin="round"/>
<polygon points="382.0,277.3 392.0,281.9 391.2,284.9 381.2,280.3" fill="#cc0000" stroke="#000" stroke-width="1.1" stroke-linejoin="round"/><polygon points="392.0,281.9 396.0,278.7 395.2,281.7 391.2,284.9" fill="#b00000" stroke="#000" stroke-width="1.1" stroke-linejoin="round"/><polygon points="382.0,277.3 386.0,274.1 396.0,278.7 392.0,281.9" fill="#e40000" stroke="#000" stroke-width="1.1" stroke-linejoin="round"/>
<polygon points="308.0,276.8 330.0,287.0 328.2,294.0 306.2,283.8" fill="#505050" stroke="#000" stroke-width="1.1" stroke-linejoin="round"/><polygon points="330.0,287.0 347.7,271.4 346.0,278.4 328.2,294.0" fill="#4c4c4c" stroke="#000" stroke-width="1.1" stroke-linejoin="round"/><polygon points="308.0,276.8 325.7,261.2 347.7,271.4 330.0,287.0" fill="#555555" stroke="#000" stroke-width="1.1" stroke-linejoin="round"/>
<polygon points="396.0,283.3 406.0,287.9 405.2,290.9 395.2,286.3" fill="#505050" stroke="#000" stroke-width="1.1" stroke-linejoin="round"/><polygon points="406.0,287.9 410.0,284.7 409.2,287.7 405.2,290.9" fill="#4c4c4c" stroke="#000" stroke-width="1.1" stroke-linejoin="round"/><polygon points="396.0,283.3 400.0,280.1 410.0,284.7 406.0,287.9" fill="#555555" stroke="#000" stroke-width="1.1" stroke-linejoin="round"/>
<polygon points="192.2,206.9 195.7,208.5 194.9,211.5 191.4,209.9" fill="#0000cc" stroke="#000" stroke-width="1.1" stroke-linejoin="round"/><polygon points="195.7,208.5 198.7,206.1 197.9,209.1 194.9,211.5" fill="#0000b4" stroke="#000" stroke-width="1.1" stroke-linejoin="round"/><polygon points="192.2,206.9 195.2,204.5 198.7,206.1 195.7,208.5" fill="#0000ee" stroke="#000" stroke-width="1.1" stroke-linejoin="round"/>
<polygon points="198.1,209.9 201.6,211.5 200.8,214.5 197.3,212.9" fill="#0000cc" stroke="#000" stroke-width="1.1" stroke-linejoin="round"/><polygon points="201.6,211.5 204.6,209.1 203.8,212.1 200.8,214.5" fill="#0000b4" stroke="#000" stroke-width="1.1" stroke-linejoin="round"/><polygon points="198.1,209.9 201.1,207.5 204.6,209.1 201.6,211.5" fill="#0000ee" stroke="#000" stroke-width="1.1" stroke-linejoin="round"/>
<polygon points="182.5,213.5 193.5,218.7 192.5,222.7 181.5,217.5" fill="#cc0000" stroke="#000" stroke-width="1.1" stroke-linejoin="round"/><polygon points="193.5,218.7 202.5,211.5 201.5,215.5 192.5,222.7" fill="#b00000" stroke="#000" stroke-width="1.1" stroke-linejoin="round"/><polygon points="182.5,213.5 191.5,206.3 202.5,211.5 193.5,218.7" fill="#e40000" stroke="#000" stroke-width="1.1" stroke-linejoin="round"/>
<polygon points="199.0,216.9 203.5,219.0 201.5,227.0 197.0,224.9" fill="#cc0000" stroke="#000" stroke-width="1.1" stroke-linejoin="round"/><polygon points="203.5,219.0 207.0,216.1 205.0,224.1 201.5,227.0" fill="#b00000" stroke="#000" stroke-width="1.1" stroke-linejoin="round"/><polygon points="199.0,216.9 202.5,214.0 207.0,216.1 203.5,219.0" fill="#e40000" stroke="#000" stroke-width="1.1" stroke-linejoin="round"/>
<polygon points="202.5,221.9 210.5,225.7 209.0,231.7 201.0,227.9" fill="#0000cc" stroke="#000" stroke-width="1.1" stroke-linejoin="round"/><polygon points="210.5,225.7 217.5,220.1 216.0,226.1 209.0,231.7" fill="#0000b4" stroke="#000" stroke-width="1.1" stroke-linejoin="round"/><polygon points="202.5,221.9 209.5,216.3 217.5,220.1 210.5,225.7" fill="#0000ee" stroke="#000" stroke-width="1.1" stroke-linejoin="round"/>
<polygon points="294.8,303.5 297.2,304.7 295.7,310.7 293.3,309.5" fill="#e00000" stroke="#000" stroke-width="1.1" stroke-linejoin="round"/><polygon points="297.2,304.7 306.2,297.5 304.7,303.5 295.7,310.7" fill="#a00000" stroke="#000" stroke-width="1.1" stroke-linejoin="round"/><polygon points="294.8,303.5 303.8,296.3 306.2,297.5 297.2,304.7" fill="#d00000" stroke="#000" stroke-width="1.1" stroke-linejoin="round"/>
<polygon points="297.8,304.9 300.2,306.1 298.7,312.1 296.3,310.9" fill="#e00000" stroke="#000" stroke-width="1.1" stroke-linejoin="round"/><polygon points="300.2,306.1 309.2,298.9 307.7,304.9 298.7,312.1" fill="#a00000" stroke="#000" stroke-width="1.1" stroke-linejoin="round"/><polygon points="297.8,304.9 306.8,297.7 309.2,298.9 300.2,306.1" fill="#d00000" stroke="#000" stroke-width="1.1" stroke-linejoin="round"/>
<polygon points="300.8,306.3 303.2,307.5 301.7,313.5 299.3,312.3" fill="#e00000" stroke="#000" stroke-width="1.1" stroke-linejoin="round"/><polygon points="303.2,307.5 312.2,300.3 310.7,306.3 301.7,313.5" fill="#a00000" stroke="#000" stroke-width="1.1" stroke-linejoin="round"/><polygon points="300.8,306.3 309.8,299.1 312.2,300.3 303.2,307.5" fill="#d00000" stroke="#000" stroke-width="1.1" stroke-linejoin="round"/>
<polygon points="303.8,307.7 306.2,308.9 304.7,314.9 302.3,313.7" fill="#e00000" stroke="#000" stroke-width="1.1" stroke-linejoin="round"/><polygon points="306.2,308.9 315.2,301.7 313.7,307.7 304.7,314.9" fill="#a00000" stroke="#000" stroke-width="1.1" stroke-linejoin="round"/><polygon points="303.8,307.7 312.8,300.5 315.2,301.7 306.2,308.9" fill="#d00000" stroke="#000" stroke-width="1.1" stroke-linejoin="round"/>
<polygon points="306.8,309.1 309.2,310.3 307.7,316.3 305.3,315.1" fill="#e00000" stroke="#000" stroke-width="1.1" stroke-linejoin="round"/><polygon points="309.2,310.3 318.2,303.1 316.7,309.1 307.7,316.3" fill="#a00000" stroke="#000" stroke-width="1.1" stroke-linejoin="round"/><polygon points="306.8,309.1 315.8,301.9 318.2,303.1 309.2,310.3" fill="#d00000" stroke="#000" stroke-width="1.1" stroke-linejoin="round"/>
<polygon points="293.0,312.6 299.0,315.4 297.2,322.4 291.2,319.6" fill="#cc0000" stroke="#000" stroke-width="1.1" stroke-linejoin="round"/><polygon points="299.0,315.4 304.0,311.4 302.2,318.4 297.2,322.4" fill="#b00000" stroke="#000" stroke-width="1.1" stroke-linejoin="round"/><polygon points="293.0,312.6 298.0,308.6 304.0,311.4 299.0,315.4" fill="#e40000" stroke="#000" stroke-width="1.1" stroke-linejoin="round"/>
<polygon points="213.8,295.4 217.2,297.0 215.5,304.0 212.0,302.4" fill="#505050" stroke="#000" stroke-width="1.1" stroke-linejoin="round"/><polygon points="217.2,297.0 220.2,294.6 218.5,301.6 215.5,304.0" fill="#4c4c4c" stroke="#000" stroke-width="1.1" stroke-linejoin="round"/><polygon points="213.8,295.4 216.8,293.0 220.2,294.6 217.2,297.0" fill="#555555" stroke="#000" stroke-width="1.1" stroke-linejoin="round"/>
<polygon points="309.0,293.4 325.7,302.8 323.7,310.8 307.0,301.4" fill="#505050" stroke="#000" stroke-width="1.1" stroke-linejoin="round"/><polygon points="325.7,302.8 336.1,295.4 334.1,303.4 323.7,310.8" fill="#4c4c4c" stroke="#000" stroke-width="1.1" stroke-linejoin="round"/><polygon points="309.0,293.4 319.4,286.0 336.1,295.4 325.7,302.8" fill="#555555" stroke="#000" stroke-width="1.1" stroke-linejoin="round"/>
<polygon points="310.0,310.1 313.5,311.7 311.5,319.7 308.0,318.1" fill="#505050" stroke="#000" stroke-width="1.1" stroke-linejoin="round"/><polygon points="313.5,311.7 317.0,308.9 315.0,316.9 311.5,319.7" fill="#4c4c4c" stroke="#000" stroke-width="1.1" stroke-linejoin="round"/><polygon points="310.0,310.1 313.5,307.3 317.0,308.9 313.5,311.7" fill="#555555" stroke="#000" stroke-width="1.1" stroke-linejoin="round"/>
<polygon points="314.0,308.1 317.5,309.7 315.5,317.7 312.0,316.1" fill="#505050" stroke="#000" stroke-width="1.1" stroke-linejoin="round"/><polygon points="317.5,309.7 321.0,306.9 319.0,314.9 315.5,317.7" fill="#4c4c4c" stroke="#000" stroke-width="1.1" stroke-linejoin="round"/><polygon points="314.0,308.1 317.5,305.3 321.0,306.9 317.5,309.7" fill="#555555" stroke="#000" stroke-width="1.1" stroke-linejoin="round"/>
<polygon points="319.0,305.1 322.5,306.7 320.5,314.7 317.0,313.1" fill="#0000cc" stroke="#000" stroke-width="1.1" stroke-linejoin="round"/><polygon points="322.5,306.7 326.0,303.9 324.0,311.9 320.5,314.7" fill="#0000b4" stroke="#000" stroke-width="1.1" stroke-linejoin="round"/><polygon points="319.0,305.1 322.5,302.3 326.0,303.9 322.5,306.7" fill="#0000ee" stroke="#000" stroke-width="1.1" stroke-linejoin="round"/>
<polygon points="302.0,318.7 306.0,320.5 304.0,328.5 300.0,326.7" fill="#0000cc" stroke="#000" stroke-width="1.1" stroke-linejoin="round"/><polygon points="306.0,320.5 310.0,317.3 308.0,325.3 304.0,328.5" fill="#0000b4" stroke="#000" stroke-width="1.1" stroke-linejoin="round"/><polygon points="302.0,318.7 306.0,315.5 310.0,317.3 306.0,320.5" fill="#0000ee" stroke="#000" stroke-width="1.1" stroke-linejoin="round"/>
<polygon points="351.0,301.2 391.5,320.0 389.8,327.0 349.2,308.2" fill="#505050" stroke="#000" stroke-width="1.1" stroke-linejoin="round"/><polygon points="391.5,320.0 414.3,296.1 412.5,303.1 389.8,327.0" fill="#4c4c4c" stroke="#000" stroke-width="1.1" stroke-linejoin="round"/><polygon points="351.0,301.2 373.8,277.3 414.3,296.1 391.5,320.0" fill="#555555" stroke="#000" stroke-width="1.1" stroke-linejoin="round"/>
<polygon points="223.8,300.4 227.2,302.0 225.5,309.0 222.0,307.4" fill="#505050" stroke="#000" stroke-width="1.1" stroke-linejoin="round"/><polygon points="227.2,302.0 230.2,299.6 228.5,306.6 225.5,309.0" fill="#4c4c4c" stroke="#000" stroke-width="1.1" stroke-linejoin="round"/><polygon points="223.8,300.4 226.8,298.0 230.2,299.6 227.2,302.0" fill="#555555" stroke="#000" stroke-width="1.1" stroke-linejoin="round"/>
<polygon points="206.6,300.9 210.1,302.5 208.3,309.5 204.8,307.9" fill="#505050" stroke="#000" stroke-width="1.1" stroke-linejoin="round"/><polygon points="210.1,302.5 213.1,300.1 211.3,307.1 208.3,309.5" fill="#4c4c4c" stroke="#000" stroke-width="1.1" stroke-linejoin="round"/><polygon points="206.6,300.9 209.6,298.5 213.1,300.1 210.1,302.5" fill="#555555" stroke="#000" stroke-width="1.1" stroke-linejoin="round"/>
<polygon points="447.5,291.8 456.5,296.0 455.0,302.0 446.0,297.8" fill="#0000c0" stroke="#000" stroke-width="1.1" stroke-linejoin="round"/><polygon points="456.5,296.0 462.5,291.2 461.0,297.2 455.0,302.0" fill="#0000a0" stroke="#000" stroke-width="1.1" stroke-linejoin="round"/><polygon points="447.5,291.8 453.5,287.0 462.5,291.2 456.5,296.0" fill="#000090" stroke="#000" stroke-width="1.1" stroke-linejoin="round"/>
<polygon points="451.0,287.3 457.0,290.1 456.6,291.6 450.6,288.8" fill="#101030" stroke="#000" stroke-width="1.1" stroke-linejoin="round"/><polygon points="457.0,290.1 460.0,287.7 459.6,289.2 456.6,291.6" fill="#101030" stroke="#000" stroke-width="1.1" stroke-linejoin="round"/><polygon points="451.0,287.3 454.0,284.9 460.0,287.7 457.0,290.1" fill="#101030" stroke="#000" stroke-width="1.1" stroke-linejoin="round"/>
<polygon points="216.6,305.9 220.1,307.5 218.3,314.5 214.8,312.9" fill="#505050" stroke="#000" stroke-width="1.1" stroke-linejoin="round"/><polygon points="220.1,307.5 223.1,305.1 221.3,312.1 218.3,314.5" fill="#4c4c4c" stroke="#000" stroke-width="1.1" stroke-linejoin="round"/><polygon points="216.6,305.9 219.6,303.5 223.1,305.1 220.1,307.5" fill="#555555" stroke="#000" stroke-width="1.1" stroke-linejoin="round"/>
<polygon points="145.8,301.6 224.7,339.0 222.9,346.0 144.1,308.6" fill="#505050" stroke="#000" stroke-width="1.1" stroke-linejoin="round"/><polygon points="224.7,339.0 243.8,324.0 242.1,331.0 222.9,346.0" fill="#4c4c4c" stroke="#000" stroke-width="1.1" stroke-linejoin="round"/><polygon points="145.8,301.6 164.9,286.6 243.8,324.0 224.7,339.0" fill="#555555" stroke="#000" stroke-width="1.1" stroke-linejoin="round"/>
<polygon points="436.0,300.0 450.5,307.0 448.6,314.5 434.1,307.5" fill="#0000cc" stroke="#000" stroke-width="1.1" stroke-linejoin="round"/><polygon points="450.5,307.0 461.0,297.5 459.1,305.0 448.6,314.5" fill="#0000b4" stroke="#000" stroke-width="1.1" stroke-linejoin="round"/><polygon points="436.0,300.0 446.5,290.5 461.0,297.5 450.5,307.0" fill="#0000ee" stroke="#000" stroke-width="1.1" stroke-linejoin="round"/>
<polygon points="374.5,332.1 382.5,335.9 381.2,340.9 373.2,337.1" fill="#505050" stroke="#000" stroke-width="1.1" stroke-linejoin="round"/><polygon points="382.5,335.9 387.5,331.9 386.2,336.9 381.2,340.9" fill="#4c4c4c" stroke="#000" stroke-width="1.1" stroke-linejoin="round"/><polygon points="374.5,332.1 379.5,328.1 387.5,331.9 382.5,335.9" fill="#555555" stroke="#000" stroke-width="1.1" stroke-linejoin="round"/>
<polygon points="358.8,334.0 362.8,335.8 360.5,344.8 356.5,343.0" fill="#0000cc" stroke="#000" stroke-width="1.1" stroke-linejoin="round"/><polygon points="362.8,335.8 366.2,333.0 364.0,342.0 360.5,344.8" fill="#0000b4" stroke="#000" stroke-width="1.1" stroke-linejoin="round"/><polygon points="358.8,334.0 362.2,331.2 366.2,333.0 362.8,335.8" fill="#0000ee" stroke="#000" stroke-width="1.1" stroke-linejoin="round"/>
<polygon points="346.5,344.5 360.5,351.0 358.8,358.0 344.8,351.5" fill="#505050" stroke="#000" stroke-width="1.1" stroke-linejoin="round"/><polygon points="360.5,351.0 373.5,344.5 371.8,351.5 358.8,358.0" fill="#4c4c4c" stroke="#000" stroke-width="1.1" stroke-linejoin="round"/><polygon points="346.5,344.5 359.5,338.0 373.5,344.5 360.5,351.0" fill="#555555" stroke="#000" stroke-width="1.1" stroke-linejoin="round"/>
<polygon points="335.4,386.3 384.1,408.3 382.4,415.3 333.6,393.3" fill="#505050" stroke="#000" stroke-width="1.1" stroke-linejoin="round"/><polygon points="384.1,408.3 451.6,353.4 449.9,360.4 382.4,415.3" fill="#4c4c4c" stroke="#000" stroke-width="1.1" stroke-linejoin="round"/><polygon points="335.4,386.3 402.9,331.4 451.6,353.4 384.1,408.3" fill="#555555" stroke="#000" stroke-width="1.1" stroke-linejoin="round"/><line x1="360.6" y1="366.9" x2="406.3" y2="390.9" stroke="#000" stroke-width="1.1"/><line x1="381.1" y1="348.6" x2="427.0" y2="372.0" stroke="#000" stroke-width="1.1"/><line x1="406.3" y1="390.9" x2="404.6" y2="397.9" stroke="#000" stroke-width="1.1"/><line x1="427.0" y1="372.0" x2="425.3" y2="379.0" stroke="#000" stroke-width="1.1"/>
<polygon points="140.3,263.6 212.4,205.6 414,299.1 341.3,358" fill="none" stroke="#3c92d8" stroke-width="1.8" stroke-linejoin="round"/>
<clipPath id="pclip"><path clip-rule="evenodd" d="M-10,-10 H750 V500 H-10 Z M178.2,134.8 L527.4,297.9 L379.5,416.5 L30.3,253.4 L117.5,183.1 L122.2,185.3 L130.0,178.3 L140.5,166.3 L151.7,164.7 L171.8,171.0 L190.7,154.9 L170.1,144.0 L171.3,138.9 Z"/><polygon points="140.6,163.2 192.5,186.5 191.1,192.0 139.2,168.7"/><polygon points="192.5,186.5 195.2,181.5 193.8,187.0 191.1,192.0"/><polygon points="140.6,163.2 143.3,158.2 195.2,181.5 192.5,186.5"/><polygon points="172.0,169.5 175.0,170.9 174.2,173.9 171.2,172.5"/><polygon points="175.0,170.9 178.0,168.5 177.2,171.5 174.2,173.9"/><polygon points="172.0,169.5 175.0,167.1 178.0,168.5 175.0,170.9"/><polygon points="234.2,157.4 287.3,180.0 285.8,186.0 232.7,163.4"/><polygon points="287.3,180.0 289.5,175.6 288.0,181.6 285.8,186.0"/><polygon points="234.2,157.4 236.4,153.0 289.5,175.6 287.3,180.0"/><polygon points="178.8,173.0 181.8,174.4 181.1,177.4 178.1,176.0"/><polygon points="181.8,174.4 184.8,172.0 184.1,175.0 181.1,177.4"/><polygon points="178.8,173.0 181.8,170.6 184.8,172.0 181.8,174.4"/><polygon points="183.8,175.5 186.8,176.9 186.1,179.9 183.1,178.5"/><polygon points="186.8,176.9 189.8,174.5 189.1,177.5 186.1,179.9"/><polygon points="183.8,175.5 186.8,173.1 189.8,174.5 186.8,176.9"/><polygon points="190.1,177.9 193.6,179.5 192.8,182.5 189.3,180.9"/><polygon points="193.6,179.5 196.6,177.1 195.8,180.1 192.8,182.5"/><polygon points="190.1,177.9 193.1,175.5 196.6,177.1 193.6,179.5"/><polygon points="257.0,176.7 261.0,178.5 259.8,183.5 255.8,181.7"/><polygon points="261.0,178.5 265.0,175.3 263.8,180.3 259.8,183.5"/><polygon points="257.0,176.7 261.0,173.5 265.0,175.3 261.0,178.5"/><polygon points="194.6,180.8 198.8,182.8 196.8,190.8 192.6,188.8"/><polygon points="198.8,182.8 202.0,180.2 200.0,188.2 196.8,190.8"/><polygon points="194.6,180.8 197.8,178.2 202.0,180.2 198.8,182.8"/><polygon points="207.8,186.8 211.8,188.7 210.8,192.7 206.8,190.8"/><polygon points="211.8,188.7 215.0,186.2 214.0,190.2 210.8,192.7"/><polygon points="207.8,186.8 211.0,184.3 215.0,186.2 211.8,188.7"/><polygon points="234.9,189.4 243.7,194.5 242.4,199.5 233.7,194.4"/><polygon points="243.7,194.5 257.6,182.9 256.4,187.9 242.4,199.5"/><polygon points="234.9,189.4 248.8,177.8 257.6,182.9 243.7,194.5"/><polygon points="200.0,183.9 204.5,186.0 202.5,194.0 198.0,191.9"/><polygon points="204.5,186.0 208.0,183.1 206.0,191.1 202.5,194.0"/><polygon points="200.0,183.9 203.5,181.0 208.0,183.1 204.5,186.0"/><polygon points="128.6,181.0 171.0,202.0 169.2,209.0 126.8,188.0"/><polygon points="171.0,202.0 188.9,188.2 187.2,195.2 169.2,209.0"/><polygon points="128.6,181.0 146.5,167.2 188.9,188.2 171.0,202.0"/><polygon points="213.7,189.8 217.7,191.7 216.7,195.7 212.7,193.8"/><polygon points="217.7,191.7 220.9,189.2 219.9,193.2 216.7,195.7"/><polygon points="213.7,189.8 216.9,187.3 220.9,189.2 217.7,191.7"/><polygon points="202.0,191.9 215.0,197.9 214.2,200.9 201.2,194.9"/><polygon points="215.0,197.9 221.0,193.1 220.2,196.1 214.2,200.9"/><polygon points="202.0,191.9 208.0,187.1 221.0,193.1 215.0,197.9"/><polygon points="117.5,191.0 125.5,194.8 124.0,200.8 116.0,197.0"/><polygon points="125.5,194.8 131.5,190.0 130.0,196.0 124.0,200.8"/><polygon points="117.5,191.0 123.5,186.2 131.5,190.0 125.5,194.8"/><polygon points="128.8,191.0 131.8,192.4 129.8,200.4 126.8,199.0"/><polygon points="131.8,192.4 134.8,190.0 132.8,198.0 129.8,200.4"/><polygon points="128.8,191.0 131.8,188.6 134.8,190.0 131.8,192.4"/><polygon points="218.8,194.0 222.8,195.8 220.8,203.8 216.8,202.0"/><polygon points="222.8,195.8 226.2,193.0 224.2,201.0 220.8,203.8"/><polygon points="218.8,194.0 222.2,191.2 226.2,193.0 222.8,195.8"/><polygon points="130.5,196.7 141.5,201.9 139.8,208.9 128.8,203.7"/><polygon points="141.5,201.9 148.5,196.3 146.8,203.3 139.8,208.9"/><polygon points="130.5,196.7 137.5,191.1 148.5,196.3 141.5,201.9"/><polygon points="193.5,199.2 206.5,205.2 205.0,211.2 192.0,205.2"/><polygon points="206.5,205.2 214.5,198.8 213.0,204.8 205.0,211.2"/><polygon points="193.5,199.2 201.5,192.8 214.5,198.8 206.5,205.2"/><polygon points="148.0,201.9 152.5,204.0 150.5,212.0 146.0,209.9"/><polygon points="152.5,204.0 156.0,201.1 154.0,209.1 150.5,212.0"/><polygon points="148.0,201.9 151.5,199.0 156.0,201.1 152.5,204.0"/><polygon points="262.5,204.9 308.2,228.2 306.6,234.7 260.9,211.4"/><polygon points="308.2,228.2 338.1,204.1 336.5,210.6 306.6,234.7"/><polygon points="262.5,204.9 292.4,180.8 338.1,204.1 308.2,228.2"/><polygon points="208.8,204.0 212.8,205.8 210.8,213.8 206.8,212.0"/><polygon points="212.8,205.8 216.2,203.0 214.2,211.0 210.8,213.8"/><polygon points="208.8,204.0 212.2,201.2 216.2,203.0 212.8,205.8"/><polygon points="177.4,208.3 189.9,214.1 188.3,220.6 175.8,214.8"/><polygon points="189.9,214.1 197.9,207.7 196.3,214.2 188.3,220.6"/><polygon points="177.4,208.3 185.4,201.9 197.9,207.7 189.9,214.1"/><polygon points="341.0,209.5 349.0,213.3 347.5,219.3 339.5,215.5"/><polygon points="349.0,213.3 355.0,208.5 353.5,214.5 347.5,219.3"/><polygon points="341.0,209.5 347.0,204.7 355.0,208.5 349.0,213.3"/><polygon points="215.6,211.4 266.2,233.8 264.7,239.8 214.1,217.4"/><polygon points="266.2,233.8 280.6,220.1 279.1,226.1 264.7,239.8"/><polygon points="215.6,211.4 230.0,197.7 280.6,220.1 266.2,233.8"/><polygon points="166.4,217.1 178.9,222.9 177.3,229.4 164.8,223.6"/><polygon points="178.9,222.9 187.4,216.1 185.8,222.6 177.3,229.4"/><polygon points="166.4,217.1 174.9,210.3 187.4,216.1 178.9,222.9"/><polygon points="345.5,216.1 361.5,223.5 359.5,231.5 343.5,224.1"/><polygon points="361.5,223.5 368.5,217.9 366.5,225.9 359.5,231.5"/><polygon points="345.5,216.1 352.5,210.5 368.5,217.9 361.5,223.5"/><polygon points="185.4,220.3 206.4,230.1 204.8,236.6 183.8,226.8"/><polygon points="206.4,230.1 216.4,222.0 214.8,228.5 204.8,236.6"/><polygon points="185.4,220.3 195.4,212.2 216.4,222.0 206.4,230.1"/><polygon points="353.8,222.5 357.8,224.3 355.8,232.3 351.8,230.5"/><polygon points="357.8,224.3 361.2,221.5 359.2,229.5 355.8,232.3"/><polygon points="353.8,222.5 357.2,219.7 361.2,221.5 357.8,224.3"/><polygon points="155.4,225.9 167.9,231.7 166.3,238.2 153.8,232.4"/><polygon points="167.9,231.7 176.4,224.9 174.8,231.4 166.3,238.2"/><polygon points="155.4,225.9 163.9,219.1 176.4,224.9 167.9,231.7"/><polygon points="349.8,225.0 353.8,226.8 351.8,234.8 347.8,233.0"/><polygon points="353.8,226.8 357.2,224.0 355.2,232.0 351.8,234.8"/><polygon points="349.8,225.0 353.2,222.2 357.2,224.0 353.8,226.8"/><polygon points="209.8,227.3 213.2,228.8 210.8,238.3 207.4,236.8"/><polygon points="213.2,228.8 217.4,225.5 215.0,235.0 210.8,238.3"/><polygon points="209.8,227.3 214.0,223.9 217.4,225.5 213.2,228.8"/><polygon points="214.0,221.7 264.0,245.1 263.8,246.1 213.8,222.7"/><polygon points="264.0,245.1 270.0,240.3 269.8,241.3 263.8,246.1"/><polygon points="214.0,221.7 220.0,216.9 270.0,240.3 264.0,245.1"/><polygon points="36.2,244.4 82.4,267.5 80.7,274.5 34.5,251.4"/><polygon points="82.4,267.5 149.4,213.9 147.7,220.9 80.7,274.5"/><polygon points="36.2,244.4 103.2,190.8 149.4,213.9 82.4,267.5"/><polygon points="217.0,220.8 221.0,222.6 220.1,226.1 216.1,224.3"/><polygon points="221.0,222.6 224.0,220.2 223.1,223.7 220.1,226.1"/><polygon points="217.0,220.8 220.0,218.4 224.0,220.2 221.0,222.6"/><polygon points="223.6,223.9 227.6,225.7 226.7,229.2 222.7,227.4"/><polygon points="227.6,225.7 230.6,223.3 229.7,226.8 226.7,229.2"/><polygon points="223.6,223.9 226.6,221.4 230.6,223.3 227.6,225.7"/><polygon points="230.2,226.9 234.2,228.8 233.3,232.3 229.3,230.4"/><polygon points="234.2,228.8 237.2,226.4 236.3,229.9 233.3,232.3"/><polygon points="230.2,226.9 233.2,224.5 237.2,226.4 234.2,228.8"/><polygon points="236.8,230.0 240.8,231.9 239.9,235.4 235.9,233.5"/><polygon points="240.8,231.9 243.8,229.5 242.9,233.0 239.9,235.4"/><polygon points="236.8,230.0 239.8,227.6 243.8,229.5 240.8,231.9"/><polygon points="243.4,233.1 247.4,235.0 246.5,238.5 242.5,236.6"/><polygon points="247.4,235.0 250.4,232.6 249.5,236.1 246.5,238.5"/><polygon points="243.4,233.1 246.4,230.7 250.4,232.6 247.4,235.0"/><polygon points="250.0,236.2 254.0,238.1 253.1,241.6 249.1,239.7"/><polygon points="254.0,238.1 257.0,235.6 256.1,239.1 253.1,241.6"/><polygon points="250.0,236.2 253.0,233.8 257.0,235.6 254.0,238.1"/><polygon points="256.6,239.3 260.6,241.1 259.7,244.6 255.7,242.8"/><polygon points="260.6,241.1 263.6,238.7 262.7,242.2 259.7,244.6"/><polygon points="256.6,239.3 259.6,236.9 263.6,238.7 260.6,241.1"/><polygon points="216.3,228.4 219.7,230.0 217.3,239.5 213.9,237.9"/><polygon points="219.7,230.0 223.9,226.6 221.5,236.1 217.3,239.5"/><polygon points="216.3,228.4 220.5,225.0 223.9,226.6 219.7,230.0"/><polygon points="277.2,231.4 280.8,233.0 279.0,240.0 275.5,238.4"/><polygon points="280.8,233.0 283.8,230.6 282.0,237.6 279.0,240.0"/><polygon points="277.2,231.4 280.2,229.0 283.8,230.6 280.8,233.0"/><polygon points="241.0,234.9 249.0,238.7 248.8,239.7 240.8,235.9"/><polygon points="249.0,238.7 251.0,237.1 250.8,238.1 248.8,239.7"/><polygon points="241.0,234.9 243.0,233.3 251.0,237.1 249.0,238.7"/><polygon points="253.0,240.9 261.0,244.7 260.8,245.7 252.8,241.9"/><polygon points="261.0,244.7 263.0,243.1 262.8,244.1 260.8,245.7"/><polygon points="253.0,240.9 255.0,239.3 263.0,243.1 261.0,244.7"/><polygon points="343.0,230.1 346.5,231.7 344.2,240.7 340.8,239.1"/><polygon points="346.5,231.7 350.0,228.9 347.8,237.9 344.2,240.7"/><polygon points="343.0,230.1 346.5,227.3 350.0,228.9 346.5,231.7"/><polygon points="290.0,230.6 293.5,232.2 291.2,241.2 287.8,239.6"/><polygon points="293.5,232.2 297.0,229.4 294.8,238.4 291.2,241.2"/><polygon points="290.0,230.6 293.5,227.8 297.0,229.4 293.5,232.2"/><polygon points="166.9,235.1 187.9,244.9 186.3,251.4 165.3,241.6"/><polygon points="187.9,244.9 204.4,231.7 202.8,238.2 186.3,251.4"/><polygon points="166.9,235.1 183.4,221.9 204.4,231.7 187.9,244.9"/><polygon points="281.2,233.4 284.8,235.0 283.0,242.0 279.5,240.4"/><polygon points="284.8,235.0 287.8,232.6 286.0,239.6 283.0,242.0"/><polygon points="281.2,233.4 284.2,231.0 287.8,232.6 284.8,235.0"/><polygon points="356.0,214.0 363.0,217.2 362.7,218.4 355.7,215.2"/><polygon points="363.0,217.2 367.0,214.0 366.7,215.2 362.7,218.4"/><polygon points="356.0,214.0 360.0,210.8 367.0,214.0 363.0,217.2"/><polygon points="285.2,234.9 288.8,236.5 287.2,242.5 283.8,240.9"/><polygon points="288.8,236.5 291.8,234.1 290.2,240.1 287.2,242.5"/><polygon points="285.2,234.9 288.2,232.5 291.8,234.1 288.8,236.5"/><polygon points="339.0,233.1 342.5,234.7 340.5,242.7 337.0,241.1"/><polygon points="342.5,234.7 346.0,231.9 344.0,239.9 340.5,242.7"/><polygon points="339.0,233.1 342.5,230.3 346.0,231.9 342.5,234.7"/><polygon points="144.4,234.7 156.9,240.6 155.3,247.1 142.8,241.2"/><polygon points="156.9,240.6 165.4,233.8 163.8,240.3 155.3,247.1"/><polygon points="144.4,234.7 152.9,227.9 165.4,233.8 156.9,240.6"/><polygon points="203.5,232.3 206.9,233.9 204.5,243.4 201.1,241.8"/><polygon points="206.9,233.9 211.1,230.5 208.7,240.0 204.5,243.4"/><polygon points="203.5,232.3 207.7,228.9 211.1,230.5 206.9,233.9"/><polygon points="210.0,233.4 213.4,235.0 211.0,244.5 207.6,242.9"/><polygon points="213.4,235.0 217.6,231.7 215.2,241.2 211.0,244.5"/><polygon points="210.0,233.4 214.2,230.1 217.6,231.7 213.4,235.0"/><polygon points="334.5,236.6 338.0,238.2 336.0,246.2 332.5,244.6"/><polygon points="338.0,238.2 341.5,235.4 339.5,243.4 336.0,246.2"/><polygon points="334.5,236.6 338.0,233.8 341.5,235.4 338.0,238.2"/><polygon points="197.2,237.4 200.6,238.9 198.2,248.4 194.8,246.9"/><polygon points="200.6,238.9 204.8,235.6 202.4,245.1 198.2,248.4"/><polygon points="197.2,237.4 201.4,234.0 204.8,235.6 200.6,238.9"/><polygon points="217.0,227.5 272.0,253.0 270.0,261.0 215.0,235.5"/><polygon points="272.0,253.0 275.0,250.0 273.0,258.0 270.0,261.0"/><polygon points="217.0,227.5 220.0,224.5 275.0,250.0 272.0,253.0"/><polygon points="330.5,239.6 334.0,241.2 332.0,249.2 328.5,247.6"/><polygon points="334.0,241.2 337.5,238.4 335.5,246.4 332.0,249.2"/><polygon points="330.5,239.6 334.0,236.8 337.5,238.4 334.0,241.2"/><polygon points="203.7,238.5 207.1,240.1 204.7,249.6 201.3,248.0"/><polygon points="207.1,240.1 211.3,236.7 208.9,246.2 204.7,249.6"/><polygon points="203.7,238.5 207.9,235.1 211.3,236.7 207.1,240.1"/><polygon points="318.0,243.1 328.0,247.7 326.5,253.7 316.5,249.1"/><polygon points="328.0,247.7 334.0,242.9 332.5,248.9 326.5,253.7"/><polygon points="318.0,243.1 324.0,238.3 334.0,242.9 328.0,247.7"/><polygon points="304.0,239.2 308.0,241.0 306.0,249.0 302.0,247.2"/><polygon points="308.0,241.0 312.0,237.8 310.0,245.8 306.0,249.0"/><polygon points="304.0,239.2 308.0,236.0 312.0,237.8 308.0,241.0"/><polygon points="309.0,242.7 313.0,244.5 311.0,252.5 307.0,250.7"/><polygon points="313.0,244.5 317.0,241.3 315.0,249.3 311.0,252.5"/><polygon points="309.0,242.7 313.0,239.5 317.0,241.3 313.0,244.5"/><polygon points="133.4,243.5 145.9,249.4 144.3,255.9 131.8,250.0"/><polygon points="145.9,249.4 154.4,242.6 152.8,249.1 144.3,255.9"/><polygon points="133.4,243.5 141.9,236.7 154.4,242.6 145.9,249.4"/><polygon points="272.0,239.5 304.0,254.5 302.5,260.5 270.5,245.5"/><polygon points="304.0,254.5 307.0,251.0 305.5,257.0 302.5,260.5"/><polygon points="272.0,239.5 275.0,236.0 307.0,251.0 304.0,254.5"/><polygon points="277.5,241.5 295.5,249.9 295.1,251.4 277.1,243.0"/><polygon points="295.5,249.9 298.5,247.5 298.1,249.0 295.1,251.4"/><polygon points="277.5,241.5 280.5,239.1 298.5,247.5 295.5,249.9"/><polygon points="190.9,242.4 194.3,244.0 191.9,253.5 188.5,251.9"/><polygon points="194.3,244.0 198.5,240.6 196.1,250.1 191.9,253.5"/><polygon points="190.9,242.4 195.1,239.0 198.5,240.6 194.3,244.0"/><polygon points="155.4,244.3 176.4,254.1 174.8,260.6 153.8,250.8"/><polygon points="176.4,254.1 185.9,246.5 184.3,253.0 174.8,260.6"/><polygon points="155.4,244.3 164.9,236.7 185.9,246.5 176.4,254.1"/><polygon points="328.5,248.9 338.5,253.5 338.0,255.5 328.0,250.9"/><polygon points="338.5,253.5 341.5,251.1 341.0,253.1 338.0,255.5"/><polygon points="328.5,248.9 331.5,246.5 341.5,251.1 338.5,253.5"/><polygon points="294.5,243.3 298.5,245.1 297.5,249.1 293.5,247.3"/><polygon points="298.5,245.1 301.5,242.7 300.5,246.7 297.5,249.1"/><polygon points="294.5,243.3 297.5,240.9 301.5,242.7 298.5,245.1"/><polygon points="197.4,243.5 200.8,245.1 198.4,254.6 195.0,253.0"/><polygon points="200.8,245.1 205.0,241.8 202.6,251.3 198.4,254.6"/><polygon points="197.4,243.5 201.6,240.2 205.0,241.8 200.8,245.1"/><polygon points="119.5,253.1 131.5,258.7 131.0,260.7 119.0,255.1"/><polygon points="131.5,258.7 139.5,252.3 139.0,254.3 131.0,260.7"/><polygon points="119.5,253.1 127.5,246.7 139.5,252.3 131.5,258.7"/><polygon points="269.0,251.5 277.0,255.3 275.8,260.3 267.8,256.5"/><polygon points="277.0,255.3 283.0,250.5 281.8,255.5 275.8,260.3"/><polygon points="269.0,251.5 275.0,246.7 283.0,250.5 277.0,255.3"/><polygon points="113.5,249.7 119.0,252.3 117.5,258.3 112.0,255.7"/><polygon points="119.0,252.3 124.0,248.3 122.5,254.3 117.5,258.3"/><polygon points="113.5,249.7 118.5,245.7 124.0,248.3 119.0,252.3"/><polygon points="184.6,247.5 188.0,249.1 185.6,258.6 182.2,257.0"/><polygon points="188.0,249.1 192.2,245.7 189.8,255.2 185.6,258.6"/><polygon points="184.6,247.5 188.8,244.1 192.2,245.7 188.0,249.1"/><polygon points="129.5,253.5 135.5,256.3 133.8,263.3 127.8,260.5"/><polygon points="135.5,256.3 143.5,249.9 141.8,256.9 133.8,263.3"/><polygon points="129.5,253.5 137.5,247.1 143.5,249.9 135.5,256.3"/><polygon points="191.1,248.6 194.5,250.2 192.1,259.7 188.7,258.1"/><polygon points="194.5,250.2 198.7,246.8 196.3,256.3 192.1,259.7"/><polygon points="191.1,248.6 195.3,245.2 198.7,246.8 194.5,250.2"/><polygon points="341.5,254.9 351.5,259.5 351.0,261.5 341.0,256.9"/><polygon points="351.5,259.5 354.5,257.1 354.0,259.1 351.0,261.5"/><polygon points="341.5,254.9 344.5,252.5 354.5,257.1 351.5,259.5"/><polygon points="128.5,254.4 132.5,256.2 130.2,265.2 126.2,263.4"/><polygon points="132.5,256.2 136.5,253.0 134.2,262.0 130.2,265.2"/><polygon points="128.5,254.4 132.5,251.2 136.5,253.0 132.5,256.2"/><polygon points="122.0,252.8 126.5,254.9 125.0,260.9 120.5,258.8"/><polygon points="126.5,254.9 130.4,251.6 128.9,257.6 125.0,260.9"/><polygon points="122.0,252.8 126.0,249.5 130.4,251.6 126.5,254.9"/><polygon points="114.8,258.7 126.8,264.3 124.5,273.3 112.5,267.7"/><polygon points="126.8,264.3 131.2,260.7 129.0,269.7 124.5,273.3"/><polygon points="114.8,258.7 119.2,255.1 131.2,260.7 126.8,264.3"/><polygon points="143.9,253.5 164.9,263.3 163.3,269.8 142.3,260.0"/><polygon points="164.9,263.3 174.4,255.7 172.8,262.2 163.3,269.8"/><polygon points="143.9,253.5 153.4,245.9 174.4,255.7 164.9,263.3"/><polygon points="178.3,252.5 181.7,254.1 179.3,263.6 175.9,262.0"/><polygon points="181.7,254.1 185.9,250.7 183.5,260.2 179.3,263.6"/><polygon points="178.3,252.5 182.5,249.1 185.9,250.7 181.7,254.1"/><polygon points="338.1,246.6 433.0,292.8 431.4,299.3 336.5,253.1"/><polygon points="433.0,292.8 467.2,264.4 465.6,270.9 431.4,299.3"/><polygon points="338.1,246.6 372.3,218.2 467.2,264.4 433.0,292.8"/><polygon points="184.8,253.7 188.2,255.2 185.8,264.7 182.4,263.2"/><polygon points="188.2,255.2 192.4,251.9 190.0,261.4 185.8,264.7"/><polygon points="184.8,253.7 189.0,250.3 192.4,251.9 188.2,255.2"/><polygon points="255.0,257.8 264.0,262.0 262.8,267.0 253.8,262.8"/><polygon points="264.0,262.0 270.0,257.2 268.8,262.2 262.8,267.0"/><polygon points="255.0,257.8 261.0,253.0 270.0,257.2 264.0,262.0"/><polygon points="314.8,249.2 350.2,266.2 348.4,273.2 313.1,256.2"/><polygon points="350.2,266.2 356.4,262.8 354.7,269.8 348.4,273.2"/><polygon points="314.8,249.2 321.0,245.8 356.4,262.8 350.2,266.2"/><polygon points="275.8,257.0 290.3,264.3 288.6,271.3 274.1,264.0"/><polygon points="290.3,264.3 297.5,258.1 295.7,265.1 288.6,271.3"/><polygon points="275.8,257.0 283.0,250.8 297.5,258.1 290.3,264.3"/><polygon points="258.2,255.9 266.2,259.6 266.1,260.1 258.1,256.4"/><polygon points="266.2,259.6 266.8,259.1 266.7,259.6 266.1,260.1"/><polygon points="258.2,255.9 258.8,255.4 266.8,259.1 266.2,259.6"/><polygon points="172.0,257.6 175.4,259.2 173.0,268.7 169.6,267.1"/><polygon points="175.4,259.2 179.6,255.8 177.2,265.3 173.0,268.7"/><polygon points="172.0,257.6 176.2,254.2 179.6,255.8 175.4,259.2"/><polygon points="178.5,258.7 181.9,260.3 179.5,269.8 176.1,268.2"/><polygon points="181.9,260.3 186.1,256.9 183.7,266.4 179.5,269.8"/><polygon points="178.5,258.7 182.7,255.3 186.1,256.9 181.9,260.3"/><polygon points="131.9,263.2 152.9,273.0 151.3,279.5 130.3,269.7"/><polygon points="152.9,273.0 162.9,264.9 161.3,271.4 151.3,279.5"/><polygon points="131.9,263.2 141.9,255.1 162.9,264.9 152.9,273.0"/><polygon points="242.5,268.5 259.0,276.5 257.0,284.5 240.5,276.5"/><polygon points="259.0,276.5 272.5,267.0 270.5,275.0 257.0,284.5"/><polygon points="242.5,268.5 256.0,259.0 272.5,267.0 259.0,276.5"/><polygon points="382.0,277.3 392.0,281.9 391.2,284.9 381.2,280.3"/><polygon points="392.0,281.9 396.0,278.7 395.2,281.7 391.2,284.9"/><polygon points="382.0,277.3 386.0,274.1 396.0,278.7 392.0,281.9"/><polygon points="308.0,276.8 330.0,287.0 328.2,294.0 306.2,283.8"/><polygon points="330.0,287.0 347.7,271.4 346.0,278.4 328.2,294.0"/><polygon points="308.0,276.8 325.7,261.2 347.7,271.4 330.0,287.0"/><polygon points="396.0,283.3 406.0,287.9 405.2,290.9 395.2,286.3"/><polygon points="406.0,287.9 410.0,284.7 409.2,287.7 405.2,290.9"/><polygon points="396.0,283.3 400.0,280.1 410.0,284.7 406.0,287.9"/><polygon points="192.2,206.9 195.7,208.5 194.9,211.5 191.4,209.9"/><polygon points="195.7,208.5 198.7,206.1 197.9,209.1 194.9,211.5"/><polygon points="192.2,206.9 195.2,204.5 198.7,206.1 195.7,208.5"/><polygon points="198.1,209.9 201.6,211.5 200.8,214.5 197.3,212.9"/><polygon points="201.6,211.5 204.6,209.1 203.8,212.1 200.8,214.5"/><polygon points="198.1,209.9 201.1,207.5 204.6,209.1 201.6,211.5"/><polygon points="182.5,213.5 193.5,218.7 192.5,222.7 181.5,217.5"/><polygon points="193.5,218.7 202.5,211.5 201.5,215.5 192.5,222.7"/><polygon points="182.5,213.5 191.5,206.3 202.5,211.5 193.5,218.7"/><polygon points="199.0,216.9 203.5,219.0 201.5,227.0 197.0,224.9"/><polygon points="203.5,219.0 207.0,216.1 205.0,224.1 201.5,227.0"/><polygon points="199.0,216.9 202.5,214.0 207.0,216.1 203.5,219.0"/><polygon points="202.5,221.9 210.5,225.7 209.0,231.7 201.0,227.9"/><polygon points="210.5,225.7 217.5,220.1 216.0,226.1 209.0,231.7"/><polygon points="202.5,221.9 209.5,216.3 217.5,220.1 210.5,225.7"/><polygon points="294.8,303.5 297.2,304.7 295.7,310.7 293.3,309.5"/><polygon points="297.2,304.7 306.2,297.5 304.7,303.5 295.7,310.7"/><polygon points="294.8,303.5 303.8,296.3 306.2,297.5 297.2,304.7"/><polygon points="297.8,304.9 300.2,306.1 298.7,312.1 296.3,310.9"/><polygon points="300.2,306.1 309.2,298.9 307.7,304.9 298.7,312.1"/><polygon points="297.8,304.9 306.8,297.7 309.2,298.9 300.2,306.1"/><polygon points="300.8,306.3 303.2,307.5 301.7,313.5 299.3,312.3"/><polygon points="303.2,307.5 312.2,300.3 310.7,306.3 301.7,313.5"/><polygon points="300.8,306.3 309.8,299.1 312.2,300.3 303.2,307.5"/><polygon points="303.8,307.7 306.2,308.9 304.7,314.9 302.3,313.7"/><polygon points="306.2,308.9 315.2,301.7 313.7,307.7 304.7,314.9"/><polygon points="303.8,307.7 312.8,300.5 315.2,301.7 306.2,308.9"/><polygon points="306.8,309.1 309.2,310.3 307.7,316.3 305.3,315.1"/><polygon points="309.2,310.3 318.2,303.1 316.7,309.1 307.7,316.3"/><polygon points="306.8,309.1 315.8,301.9 318.2,303.1 309.2,310.3"/><polygon points="293.0,312.6 299.0,315.4 297.2,322.4 291.2,319.6"/><polygon points="299.0,315.4 304.0,311.4 302.2,318.4 297.2,322.4"/><polygon points="293.0,312.6 298.0,308.6 304.0,311.4 299.0,315.4"/><polygon points="213.8,295.4 217.2,297.0 215.5,304.0 212.0,302.4"/><polygon points="217.2,297.0 220.2,294.6 218.5,301.6 215.5,304.0"/><polygon points="213.8,295.4 216.8,293.0 220.2,294.6 217.2,297.0"/><polygon points="309.0,293.4 325.7,302.8 323.7,310.8 307.0,301.4"/><polygon points="325.7,302.8 336.1,295.4 334.1,303.4 323.7,310.8"/><polygon points="309.0,293.4 319.4,286.0 336.1,295.4 325.7,302.8"/><polygon points="310.0,310.1 313.5,311.7 311.5,319.7 308.0,318.1"/><polygon points="313.5,311.7 317.0,308.9 315.0,316.9 311.5,319.7"/><polygon points="310.0,310.1 313.5,307.3 317.0,308.9 313.5,311.7"/><polygon points="314.0,308.1 317.5,309.7 315.5,317.7 312.0,316.1"/><polygon points="317.5,309.7 321.0,306.9 319.0,314.9 315.5,317.7"/><polygon points="314.0,308.1 317.5,305.3 321.0,306.9 317.5,309.7"/><polygon points="319.0,305.1 322.5,306.7 320.5,314.7 317.0,313.1"/><polygon points="322.5,306.7 326.0,303.9 324.0,311.9 320.5,314.7"/><polygon points="319.0,305.1 322.5,302.3 326.0,303.9 322.5,306.7"/><polygon points="302.0,318.7 306.0,320.5 304.0,328.5 300.0,326.7"/><polygon points="306.0,320.5 310.0,317.3 308.0,325.3 304.0,328.5"/><polygon points="302.0,318.7 306.0,315.5 310.0,317.3 306.0,320.5"/><polygon points="351.0,301.2 391.5,320.0 389.8,327.0 349.2,308.2"/><polygon points="391.5,320.0 414.3,296.1 412.5,303.1 389.8,327.0"/><polygon points="351.0,301.2 373.8,277.3 414.3,296.1 391.5,320.0"/><polygon points="223.8,300.4 227.2,302.0 225.5,309.0 222.0,307.4"/><polygon points="227.2,302.0 230.2,299.6 228.5,306.6 225.5,309.0"/><polygon points="223.8,300.4 226.8,298.0 230.2,299.6 227.2,302.0"/><polygon points="206.6,300.9 210.1,302.5 208.3,309.5 204.8,307.9"/><polygon points="210.1,302.5 213.1,300.1 211.3,307.1 208.3,309.5"/><polygon points="206.6,300.9 209.6,298.5 213.1,300.1 210.1,302.5"/><polygon points="447.5,291.8 456.5,296.0 455.0,302.0 446.0,297.8"/><polygon points="456.5,296.0 462.5,291.2 461.0,297.2 455.0,302.0"/><polygon points="447.5,291.8 453.5,287.0 462.5,291.2 456.5,296.0"/><polygon points="451.0,287.3 457.0,290.1 456.6,291.6 450.6,288.8"/><polygon points="457.0,290.1 460.0,287.7 459.6,289.2 456.6,291.6"/><polygon points="451.0,287.3 454.0,284.9 460.0,287.7 457.0,290.1"/><polygon points="216.6,305.9 220.1,307.5 218.3,314.5 214.8,312.9"/><polygon points="220.1,307.5 223.1,305.1 221.3,312.1 218.3,314.5"/><polygon points="216.6,305.9 219.6,303.5 223.1,305.1 220.1,307.5"/><polygon points="145.8,301.6 224.7,339.0 222.9,346.0 144.1,308.6"/><polygon points="224.7,339.0 243.8,324.0 242.1,331.0 222.9,346.0"/><polygon points="145.8,301.6 164.9,286.6 243.8,324.0 224.7,339.0"/><polygon points="436.0,300.0 450.5,307.0 448.6,314.5 434.1,307.5"/><polygon points="450.5,307.0 461.0,297.5 459.1,305.0 448.6,314.5"/><polygon points="436.0,300.0 446.5,290.5 461.0,297.5 450.5,307.0"/><polygon points="374.5,332.1 382.5,335.9 381.2,340.9 373.2,337.1"/><polygon points="382.5,335.9 387.5,331.9 386.2,336.9 381.2,340.9"/><polygon points="374.5,332.1 379.5,328.1 387.5,331.9 382.5,335.9"/><polygon points="358.8,334.0 362.8,335.8 360.5,344.8 356.5,343.0"/><polygon points="362.8,335.8 366.2,333.0 364.0,342.0 360.5,344.8"/><polygon points="358.8,334.0 362.2,331.2 366.2,333.0 362.8,335.8"/><polygon points="346.5,344.5 360.5,351.0 358.8,358.0 344.8,351.5"/><polygon points="360.5,351.0 373.5,344.5 371.8,351.5 358.8,358.0"/><polygon points="346.5,344.5 359.5,338.0 373.5,344.5 360.5,351.0"/><polygon points="335.4,386.3 384.1,408.3 382.4,415.3 333.6,393.3"/><polygon points="384.1,408.3 451.6,353.4 449.9,360.4 382.4,415.3"/><polygon points="335.4,386.3 402.9,331.4 451.6,353.4 384.1,408.3"/></clipPath>
<polygon points="138.6,332.9 213.7,135.4 415.1,230 340,427.4" fill="none" stroke="#d0a488" stroke-width="1.8" stroke-linejoin="round"/>
<polygon clip-path="url(#pclip)" points="138.6,332.9 213.7,135.4 415.1,230 340,427.4" fill="none" stroke="#f0a4a8" stroke-width="1.6" stroke-linejoin="round"/>
<polygon points="349.8,153.7 277.5,212.4 204.4,408.4 275.4,351.0" fill="none" stroke="#74cc3a" stroke-width="1.7" stroke-linejoin="round"/>
<polygon clip-path="url(#pclip)" points="349.8,153.7 277.5,212.4 204.4,408.4 275.4,351.0" fill="none" stroke="#86ec3c" stroke-width="1.7" stroke-linejoin="round"/>
<polyline points="276.8,282 310,296.6" fill="none" stroke="#74cc3a" stroke-width="1.7"/>
<polyline points="265.4,291.4 276.8,282" fill="none" stroke="#c8a888" stroke-width="1.6"/>
<polyline points="276.8,282 289.3,249.8" fill="none" stroke="#3c92d8" stroke-width="1.6"/>
</g>
<g>
<defs>
<radialGradient id="ysph" cx="0.6" cy="0.4" r="0.6"><stop offset="0" stop-color="#f4eea0"/><stop offset="1" stop-color="#d8cc50"/></radialGradient>
<linearGradient id="zg" x1="0" y1="0" x2="1" y2="0"><stop offset="0" stop-color="#4a88d8"/><stop offset="0.5" stop-color="#7ab4f0"/><stop offset="1" stop-color="#4a88d8"/></linearGradient>
</defs>
<!-- Z -->
<line x1="65.5" y1="433.5" x2="77.5" y2="401.5" stroke="#5a9ae6" stroke-width="4.2"/>
<polygon points="83.1,387.3 80.9,403.6 77.6,402.0 74.2,401.0" fill="#5fa2ec"/>
<line x1="80.5" y1="391.5" x2="78" y2="401" stroke="#8cc4f6" stroke-width="1.2"/>
<!-- Y -->
<line x1="65.5" y1="435.5" x2="101" y2="451" stroke="#58c858" stroke-width="3.6"/>
<polygon points="114.2,458.6 98.5,454.8 100.5,451 102.3,446.8" fill="#60d060"/>
<!-- X -->
<line x1="65" y1="436" x2="55" y2="443.5" stroke="#e04040" stroke-width="3.6"/>
<polygon points="47.8,448.8 52.5,440.5 56,443.5 58.5,446" fill="#e43a3a"/>
<circle cx="65.4" cy="435" r="6.8" fill="url(#ysph)"/>
<circle cx="63" cy="437.5" r="2.2" fill="#f06a20"/>
<path d="M82.9,378 L82.9,376.1 L89.4,376.1 L83,384.7 L89.6,384.7 L89.6,382.6" fill="none" stroke="#5a90e0" stroke-width="1.15"/>
<path d="M117.3,456.9 L121.6,462.3 L125.9,456.9 M121.6,462.3 L121.6,466.8 M116.6,456.9 L118.6,456.9 M124.8,456.9 L126.6,456.9 M120.4,466.8 L122.8,466.8" fill="none" stroke="#50c050" stroke-width="1.15"/>
<path d="M40.6,446.8 L48.6,456.5 M48.6,446.8 L40.6,456.5" fill="none" stroke="#e04a4a" stroke-width="1.15"/>
</g>

</svg>
<svg width="736" height="24" viewBox="0 0 736 24" style="position:absolute;left:0;top:0">
<rect x="172" y="0" width="564" height="21.5" fill="#f0f0f0"/>
<rect x="172.5" y="0" width="15" height="21" fill="#e2e2e2"/>
<rect x="171.5" y="0" width="1.5" height="22" fill="#8e8e8e"/>
<rect x="187.2" y="0" width="1.2" height="21.5" fill="#a8a8a8"/>
<rect x="171.5" y="21" width="564.5" height="1.5" fill="#9a9a9a"/>
<g fill="#4e4e4e"><circle cx="175.5" cy="1.5" r="0.9"/><circle cx="178.5" cy="1.5" r="0.9"/><circle cx="181.6" cy="1.5" r="0.9"/><circle cx="184.6" cy="1.5" r="0.9"/><circle cx="175.5" cy="4.6" r="0.9"/><circle cx="178.5" cy="4.6" r="0.9"/><circle cx="181.6" cy="4.6" r="0.9"/><circle cx="184.6" cy="4.6" r="0.9"/></g>
<!-- separators -->
<g fill="#a4a4a4">
<rect x="243.3" y="0" width="1.6" height="21"/>
<rect x="367.3" y="0" width="2.6" height="21"/>
<rect x="422.9" y="0" width="1.8" height="21"/>
<rect x="521.4" y="0" width="2.3" height="21"/>
<rect x="631.2" y="0" width="2.4" height="21"/>
<rect x="679.7" y="0" width="2.6" height="21"/>
</g>
<!-- dark buttons -->
<rect x="370" y="0" width="25" height="21.8" fill="#484848"/>
<rect x="523.7" y="0" width="26" height="21.8" fill="#484848"/>
<rect x="633.6" y="0" width="46.1" height="21.8" fill="#484848"/>
<!-- icon1 polyline -->
<g stroke="#626262" stroke-width="1.3" fill="none">
<polyline points="195.8,1.7 201.9,1.7 201.9,8.8 209.4,8.8 209.4,15.3 195.8,15.3 195.8,1.7"/>
</g>
<g fill="#5a5a5a">
<circle cx="195.8" cy="1.7" r="1.45"/><circle cx="201.9" cy="1.7" r="1.45"/><circle cx="201.9" cy="8.8" r="1.45"/>
<circle cx="209.4" cy="8.8" r="1.45"/><circle cx="209.4" cy="15.3" r="1.45"/><circle cx="195.8" cy="15.3" r="1.45"/>
</g>
<!-- icon2 bracket -->
<path d="M221.6,4.2 Q221.6,3 223,3 L225.5,3 L225.5,11.5 L235.3,11.5 L235.3,16 L222.8,16 Q221.6,16 221.6,14.8 Z" fill="#262626"/>
<path d="M222.6,4.5 L224.2,4.5 L224.2,13 L234,13 L234,14.8 L222.6,14.8 Z" fill="#f4f4f4"/>
<rect x="223.8" y="10.8" width="2.2" height="2.2" fill="#262626"/>
<circle cx="233.6" cy="4.4" r="3.2" fill="none" stroke="#262626" stroke-width="1.6"/>
<circle cx="233.6" cy="4.4" r="0.8" fill="#262626"/>
<!-- magnifier -->
<rect x="257.2" y="2.5" width="8.3" height="7" fill="#c0c0c0"/>
<rect x="258.8" y="3.8" width="4.8" height="4.5" fill="#f4f4f4"/>
<circle cx="254.7" cy="7.1" r="4" fill="none" stroke="#4a4a4a" stroke-width="1.5"/>
<line x1="257.6" y1="10" x2="263.8" y2="14.8" stroke="#1e1e1e" stroke-width="2"/>
<!-- dropdowns -->
<g fill="#1e1e1e">
<polygon points="277.6,5.4 286.8,5.4 282.2,10.2"/>
<polygon points="351.9,5.6 361.1,5.6 356.5,10.1"/>
<polygon points="457.7,5.4 467.2,5.4 462.4,10.1"/>
<polygon points="505.8,5.2 515,5.2 510.4,9.8"/>
</g>
<polygon points="665.3,5.6 675.4,5.6 670.3,10.8" fill="#ffffff"/>
<!-- extrude -->
<polygon points="298.5,16.3 303.6,9.2 314.3,9.2 309.2,16.3" fill="#1e1e1e"/>
<path d="M306.2,0.5 L311.3,4.8 L308.2,4.8 L308.2,13 L304.2,13 L304.2,4.8 L301.1,4.8 Z" fill="#fff" stroke="#1e1e1e" stroke-width="1"/>
<!-- triad icon -->
<g stroke="#1e1e1e" stroke-width="1.1" fill="none">
<line x1="332.1" y1="7.5" x2="332.1" y2="2.5"/>
<line x1="334.5" y1="9.9" x2="339" y2="9.9"/>
<line x1="330.4" y1="11.6" x2="326.5" y2="15.2"/>
<circle cx="332.1" cy="9.9" r="2.2" stroke-width="1.4"/>
</g>
<g fill="#1e1e1e">
<polygon points="332.1,1.2 330.2,3.8 334,3.8"/>
<polygon points="341.2,9.9 338.5,8 338.5,11.8"/>
<polygon points="325.2,16.5 326,13.4 328.3,15.6"/>
</g>
<!-- cube selected -->
<g stroke="#9a9a9a" stroke-width="0.9" fill="#ffffff" stroke-linejoin="round">
<polygon points="374.2,3.2 382.4,0.2 390.6,3.7 383.7,8.2"/>
<polygon points="374.2,4.4 383.7,8.9 383.7,16.6 374.8,12.2"/>
<polygon points="384.6,8.9 390.6,5 390.6,12.5 384.6,16.3"/>
</g>
<!-- wireframe cube -->
<g stroke="#3a3a3a" stroke-width="1.15" fill="none" stroke-linejoin="round">
<polygon points="407.6,0.3 417,4.9 417,12.2 410.9,15.9 401.9,11 401.9,3.7"/>
<line x1="407.6" y1="0.3" x2="407.6" y2="6.6"/>
<line x1="401.9" y1="3.7" x2="407.6" y2="6.6"/>
<line x1="417" y1="4.9" x2="407.6" y2="6.6"/>
<line x1="407.6" y1="6.6" x2="410.9" y2="8.3"/>
<line x1="410.9" y1="8.3" x2="410.9" y2="15.9"/>
<line x1="401.9" y1="11" x2="410.9" y2="8.3"/>
<line x1="417" y1="12.2" x2="410.9" y2="8.3"/>
</g>
<!-- crossed eye -->
<path d="M430.6,7.8 Q438.6,-1.2 446.6,7.8 Q438.6,16.8 430.6,7.8 Z" fill="#1e1e1e"/>
<ellipse cx="438.6" cy="7.9" rx="3.1" ry="2.3" fill="none" stroke="#e8e8e8" stroke-width="1"/>
<circle cx="438.6" cy="7.9" r="1.4" fill="#1e1e1e"/>
<line x1="431" y1="0.4" x2="446.3" y2="15" stroke="#3a3a3a" stroke-width="1.1"/>
<!-- eye box -->
<rect x="478.7" y="2.3" width="16.1" height="11.6" fill="#1e1e1e"/>
<line x1="479" y1="0" x2="480.5" y2="2.5" stroke="#1e1e1e" stroke-width="1"/>
<line x1="493.5" y1="13.5" x2="494.8" y2="15.3" stroke="#1e1e1e" stroke-width="1"/>
<path d="M480.3,8.1 Q486.7,2.5 493.2,8.1 Q486.7,13.7 480.3,8.1 Z" fill="#f0f0f0"/>
<circle cx="486.7" cy="8.1" r="2.4" fill="#3a3a3a"/>
<circle cx="486.7" cy="8.1" r="0.9" fill="#9a9a9a"/>
<!-- node icon (white on dark) -->
<g stroke="#e8e8e8" stroke-width="1.3" fill="none">
<line x1="531.5" y1="11.8" x2="541.5" y2="5.2"/>
<circle cx="542.4" cy="4.4" r="2"/>
<circle cx="530.5" cy="12.3" r="2"/>
<polygon points="531.4,3.0 533.9,5.6 531.4,8.2 528.9,5.6" stroke-linejoin="round"/>
<polygon points="541.4,10.9 543.9,13.5 541.4,16.1 538.9,13.5" stroke-linejoin="round"/>
</g>
<g fill="#4a4a4a"><circle cx="542.4" cy="4.4" r="0.6"/><circle cx="530.5" cy="12.3" r="0.6"/><circle cx="531.4" cy="5.6" r="0.6"/><circle cx="541.4" cy="13.5" r="0.6"/></g>
<!-- sheet icon -->
<rect x="560.4" y="4" width="11.3" height="11.8" fill="#fafafa" stroke="#1e1e1e" stroke-width="1.3"/>
<g fill="#1e1e1e">
<rect x="562.6" y="0.6" width="1.3" height="1.6"/><rect x="565" y="0.6" width="1.3" height="1.6"/><rect x="567.4" y="0.6" width="1.3" height="1.6"/><rect x="569.8" y="0.6" width="1.3" height="1.6"/>
<rect x="556" y="7.2" width="1.6" height="1.2"/><rect x="556" y="9.6" width="1.6" height="1.2"/><rect x="556" y="12" width="1.6" height="1.2"/><rect x="556" y="14.4" width="1.6" height="1.2"/>
</g>
<!-- split cube -->
<polygon points="583.1,3 584,13.9 590.5,15.8 590.2,5" fill="#f8f8f8" stroke="#2a2a2a" stroke-width="1"/>
<line x1="583.8" y1="4.5" x2="590" y2="14.8" stroke="#2a2a2a" stroke-width="0.9"/>
<line x1="590" y1="5.5" x2="584.2" y2="13.5" stroke="#2a2a2a" stroke-width="0.9"/>
<polygon points="583.1,3 587.2,0.6 593.8,2 590.2,5" fill="#262626"/>
<polygon points="590.2,5 593.8,2 593.8,7.5 590.4,9.5" fill="#9a9a9a"/>
<polygon points="590.4,8.5 595.4,6.4 598,7.7 598,14.2 593.5,16 590.5,15.8" fill="#5a5a5a" stroke="#262626" stroke-width="0.9"/>
<polygon points="593.5,9.4 598,7.7 598,14.2 593.5,16" fill="#8a8a8a"/>
<!-- stack icon -->
<polygon points="613.3,0.8 625.8,12.2 619,15.9 613.3,12.2" fill="#d4d4d4" stroke="#8a8a8a" stroke-width="0.8"/>
<polyline points="614.5,3.5 623.5,11.5 619,14.2" fill="none" stroke="#9a9a9a" stroke-width="0.7" stroke-dasharray="1,0.8"/>
<path d="M610,3.5 L613.6,3.5 L613.6,12.3 L618.5,12.3 L621.5,16 L610,16 Z" fill="#1e1e1e"/>
<path d="M613.6,7.5 L616,9.8 L616,12.3 L613.6,12.3 Z" fill="#1e1e1e"/>
<!-- filter (white) -->
<path d="M637.9,0 L654.5,0 L654.5,2.5 L648.2,9.5 L647.6,16.6 L645,16.6 L644.2,9.5 L637.9,2.5 Z" fill="#ffffff"/>
<!-- icon right -->
<rect x="688.4" y="0" width="15.8" height="2.4" fill="#5a5a5a"/><rect x="690" y="1.2" width="10" height="0.9" fill="#2a2a2a"/>
<line x1="690.4" y1="2" x2="690.4" y2="11" stroke="#5a5a5a" stroke-width="0.9"/>
<rect x="688.6" y="11.5" width="6.6" height="5" fill="#6a6a6a" stroke="#3a3a3a" stroke-width="0.6"/><line x1="690.8" y1="11.5" x2="690.8" y2="16.5" stroke="#3a3a3a" stroke-width="0.6"/><line x1="693" y1="11.5" x2="693" y2="16.5" stroke="#3a3a3a" stroke-width="0.6"/>
<rect x="698.2" y="2.2" width="4.8" height="14.5" fill="#2e2e2e"/>
<rect x="699.4" y="5" width="2.4" height="2" fill="#e8e8e8"/>
<rect x="699.4" y="10.5" width="2.4" height="2" fill="#e8e8e8"/>
<!-- eyedropper disabled -->
<path d="M716.6,16 L717.6,12.4 L725.6,4.6 L728.6,7.6 L720.4,15.4 Z" fill="#e4e4e4" stroke="#d0d0d0" stroke-width="1.2" stroke-linejoin="round"/>
<path d="M724.8,5.2 L727.2,2.4 Q729,0.8 730.8,2.2 Q732.4,4 730.6,5.8 L728,8.2 Z" fill="#d2d2d2"/>
</svg>

</body></html>
